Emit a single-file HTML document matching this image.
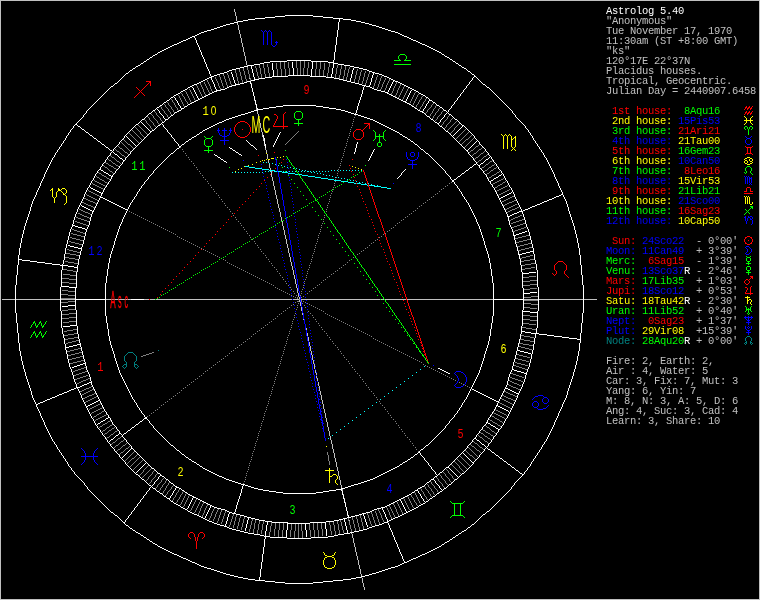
<!DOCTYPE html>
<html><head><meta charset="utf-8"><title>Astrolog 5.40</title>
<style>
html,body{margin:0;padding:0;background:#000;}
body{width:760px;height:600px;overflow:hidden;position:relative;}
svg{position:absolute;left:0;top:0;display:block}

.sb{position:absolute;left:606px;top:0;font-family:"Liberation Mono",monospace;font-size:10.5px;letter-spacing:-0.3px;line-height:10px;white-space:pre;color:#c0c0c0;will-change:transform;transform:translateZ(0)}
.sb div{position:absolute;left:0;height:10px}
.r{color:#ff0000}.g{color:#00ff00}.y{color:#ffff00}.b{color:#0000ff}.w{color:#ffffff}.l{color:#c0c0c0}.d{color:#008080}
text{font-family:"Liberation Mono",monospace;stroke:none}

</style></head><body>
<svg width="760" height="600" viewBox="0 0 760 600" shape-rendering="crispEdges" fill="none" stroke-width="1">
<rect width="760" height="600" fill="#000" stroke="none"/>
<path stroke="#c0c0c0" d="M0 0.5h760m-760 1h1m758 0h1m-760 1h1m758 0h1m-760 1h1m758 0h1m-760 1h1m758 0h1m-760 1h1m758 0h1m-760 1h1m758 0h1m-760 1h1m758 0h1m-760 1h1m758 0h1m-760 1h1m233 0h1m524 0h1m-760 1h1m233 0h1m524 0h1m-760 1h1m233 0h1m524 0h1m-760 1h1m234 0h1m523 0h1m-760 1h1m234 0h1m523 0h1m-760 1h1m234 0h1m523 0h1m-760 1h1m234 0h1m523 0h1m-760 1h1m235 0h1m522 0h1m-760 1h1m235 0h1m522 0h1m-760 1h1m235 0h1m522 0h1m-760 1h1m235 0h1m522 0h1m-760 1h1m235 0h1m522 0h1m-760 1h1m236 0h1m521 0h1m-760 1h1m758 0h1m-760 1h1m236 0h1m521 0h1m-760 1h1m236 0h1m521 0h1m-760 1h1m237 0h1m520 0h1m-760 1h1m237 0h1m520 0h1m-760 1h1m237 0h1m520 0h1m-760 1h1m237 0h1m520 0h1m-760 1h1m237 0h1m520 0h1m-760 1h1m238 0h1m519 0h1m-760 1h1m238 0h1m519 0h1m-760 1h1m238 0h1m519 0h1m-760 1h1m238 0h1m519 0h1m-760 1h1m239 0h1m518 0h1m-760 1h1m239 0h1m518 0h1m-760 1h1m239 0h1m518 0h1m-760 1h1m239 0h1m518 0h1m-760 1h1m240 0h1m517 0h1m-760 1h1m240 0h1m517 0h1m-760 1h1m240 0h1m517 0h1m-760 1h1m240 0h1m517 0h1m-760 1h1m240 0h1m517 0h1m-760 1h1m241 0h1m516 0h1m-760 1h1m241 0h1m516 0h1m-760 1h1m241 0h1m516 0h1m-760 1h1m241 0h1m516 0h1m-760 1h1m242 0h1m515 0h1m-760 1h1m242 0h1m515 0h1m-760 1h1m242 0h1m515 0h1m-760 1h1m242 0h1m515 0h1m-760 1h1m242 0h1m515 0h1m-760 1h1m243 0h1m514 0h1m-760 1h1m243 0h1m514 0h1m-760 1h1m243 0h1m514 0h1m-760 1h1m243 0h1m514 0h1m-760 1h1m244 0h1m513 0h1m-760 1h1m244 0h1m513 0h1m-760 1h1m244 0h1m513 0h1m-760 1h1m244 0h1m513 0h1m-760 1h1m244 0h1m513 0h1m-760 1h1m245 0h1m512 0h1m-760 1h1m245 0h1m512 0h1m-760 1h1m245 0h1m512 0h1m-760 1h1m245 0h1m512 0h1m-760 1h1m246 0h1m511 0h1m-760 1h1m758 0h1m-760 1h1m758 0h1m-760 1h1m758 0h1m-760 1h1m758 0h1m-760 1h1m758 0h1m-760 1h1m758 0h1m-760 1h1m758 0h1m-760 1h1m758 0h1m-760 1h1m758 0h1m-760 1h1m758 0h1m-760 1h1m758 0h1m-760 1h1m758 0h1m-760 1h1m248 0h1m509 0h1m-760 1h1m758 0h1m-760 1h1m758 0h1m-760 1h1m758 0h1m-760 1h1m758 0h1m-760 1h1m250 0h1m507 0h1m-760 1h1m758 0h1m-760 1h1m758 0h1m-760 1h1m758 0h1m-760 1h1m758 0h1m-760 1h1m758 0h1m-760 1h1m758 0h1m-760 1h1m758 0h1m-760 1h1m758 0h1m-760 1h1m758 0h1m-760 1h1m758 0h1m-760 1h1m758 0h1m-760 1h1m758 0h1m-760 1h1m758 0h1m-760 1h1m758 0h1m-760 1h1m758 0h1m-760 1h1m758 0h1m-760 1h1m253 0h1m504 0h1m-760 1h1m758 0h1m-760 1h1m758 0h1m-760 1h1m758 0h1m-760 1h1m254 0h1m503 0h1m-760 1h1m758 0h1m-760 1h1m758 0h1m-760 1h1m758 0h1m-760 1h1m255 0h1m502 0h1m-760 1h1m255 0h1m502 0h1m-760 1h1m758 0h1m-760 1h1m256 0h1m501 0h1m-760 1h1m256 0h1m501 0h1m-760 1h1m256 0h1m501 0h1m-760 1h1m257 0h1m500 0h1m-760 1h1m257 0h1m500 0h1m-760 1h1m257 0h1m500 0h1m-760 1h1m257 0h1m500 0h1m-760 1h1m257 0h1m500 0h1m-760 1h1m258 0h1m499 0h1m-760 1h1m258 0h1m499 0h1m-760 1h1m258 0h1m499 0h1m-760 1h1m258 0h1m499 0h1m-760 1h1m259 0h1m498 0h1m-760 1h1m259 0h1m498 0h1m-760 1h1m259 0h1m498 0h1m-760 1h1m259 0h1m498 0h1m-760 1h1m259 0h1m498 0h1m-760 1h1m260 0h1m497 0h1m-760 1h1m260 0h1m497 0h1m-760 1h1m260 0h1m497 0h1m-760 1h1m260 0h1m497 0h1m-760 1h1m261 0h1m496 0h1m-760 1h1m261 0h1m496 0h1m-760 1h1m261 0h1m496 0h1m-760 1h1m261 0h1m496 0h1m-760 1h1m261 0h1m496 0h1m-760 1h1m758 0h1m-760 1h1m262 0h1m495 0h1m-760 1h1m262 0h1m495 0h1m-760 1h1m262 0h1m495 0h1m-760 1h1m758 0h1m-760 1h1m758 0h1m-760 1h1m758 0h1m-760 1h1m263 0h1m494 0h1m-760 1h1m263 0h1m494 0h1m-760 1h1m758 0h1m-760 1h1m758 0h1m-760 1h1m264 0h1m493 0h1m-760 1h1m264 0h1m493 0h1m-760 1h1m265 0h1m492 0h1m-760 1h1m265 0h1m492 0h1m-760 1h1m265 0h1m492 0h1m-760 1h1m758 0h1m-760 1h1m266 0h1m491 0h1m-760 1h1m266 0h1m491 0h1m-760 1h1m266 0h1m491 0h1m-760 1h1m266 0h1m491 0h1m-760 1h1m266 0h1m491 0h1m-760 1h1m758 0h1m-760 1h1m267 0h1m490 0h1m-760 1h1m267 0h1m490 0h1m-760 1h1m267 0h1m490 0h1m-760 1h1m758 0h1m-760 1h1m268 0h1m489 0h1m-760 1h1m268 0h1m489 0h1m-760 1h1m268 0h1m489 0h1m-760 1h1m268 0h1m489 0h1m-760 1h1m269 0h1m488 0h1m-760 1h1m269 0h1m488 0h1m-760 1h1m758 0h1m-760 1h1m269 0h1m488 0h1m-760 1h1m270 0h1m487 0h1m-760 1h1m270 0h1m487 0h1m-760 1h1m270 0h1m487 0h1m-760 1h1m270 0h1m487 0h1m-760 1h1m270 0h1m487 0h1m-760 1h1m271 0h1m486 0h1m-760 1h1m271 0h1m486 0h1m-760 1h1m271 0h1m486 0h1m-760 1h1m271 0h1m486 0h1m-760 1h1m272 0h1m485 0h1m-760 1h1m272 0h1m485 0h1m-760 1h1m272 0h1m485 0h1m-760 1h1m272 0h1m485 0h1m-760 1h1m272 0h1m485 0h1m-760 1h1m273 0h1m484 0h1m-760 1h1m273 0h1m484 0h1m-760 1h1m273 0h1m484 0h1m-760 1h1m273 0h1m484 0h1m-760 1h1m274 0h1m483 0h1m-760 1h1m274 0h1m483 0h1m-760 1h1m274 0h1m483 0h1m-760 1h1m274 0h1m483 0h1m-760 1h1m274 0h1m483 0h1m-760 1h1m275 0h1m482 0h1m-760 1h1m275 0h1m482 0h1m-760 1h1m275 0h1m482 0h1m-760 1h1m275 0h1m482 0h1m-760 1h1m276 0h1m481 0h1m-760 1h1m276 0h1m481 0h1m-760 1h1m276 0h1m481 0h1m-760 1h1m276 0h1m481 0h1m-760 1h1m276 0h1m481 0h1m-760 1h1m277 0h1m480 0h1m-760 1h1m277 0h1m480 0h1m-760 1h1m277 0h1m480 0h1m-760 1h1m277 0h1m480 0h1m-760 1h1m278 0h1m479 0h1m-760 1h1m278 0h1m479 0h1m-760 1h1m278 0h1m479 0h1m-760 1h1m278 0h1m479 0h1m-760 1h1m279 0h1m478 0h1m-760 1h1m279 0h1m478 0h1m-760 1h1m279 0h1m478 0h1m-760 1h1m279 0h1m478 0h1m-760 1h1m279 0h1m478 0h1m-760 1h1m280 0h1m477 0h1m-760 1h1m280 0h1m477 0h1m-760 1h1m280 0h1m477 0h1m-760 1h1m280 0h1m477 0h1m-760 1h1m281 0h1m476 0h1m-760 1h1m281 0h1m476 0h1m-760 1h1m281 0h1m476 0h1m-760 1h1m281 0h1m476 0h1m-760 1h1m281 0h1m476 0h1m-760 1h1m282 0h1m475 0h1m-760 1h1m282 0h1m475 0h1m-760 1h1m282 0h1m475 0h1m-760 1h1m282 0h1m475 0h1m-760 1h1m283 0h1m474 0h1m-760 1h1m283 0h1m474 0h1m-760 1h1m283 0h1m474 0h1m-760 1h1m283 0h1m474 0h1m-760 1h1m283 0h1m474 0h1m-760 1h1m284 0h1m473 0h1m-760 1h1m284 0h1m473 0h1m-760 1h1m284 0h1m473 0h1m-760 1h1m284 0h1m473 0h1m-760 1h1m285 0h1m472 0h1m-760 1h1m285 0h1m472 0h1m-760 1h1m285 0h1m472 0h1m-760 1h1m285 0h1m472 0h1m-760 1h1m285 0h1m472 0h1m-760 1h1m286 0h1m471 0h1m-760 1h1m286 0h1m471 0h1m-760 1h1m286 0h1m471 0h1m-760 1h1m286 0h1m471 0h1m-760 1h1m287 0h1m470 0h1m-760 1h1m287 0h1m470 0h1m-760 1h1m287 0h1m470 0h1m-760 1h1m287 0h1m470 0h1m-760 1h1m287 0h1m470 0h1m-760 1h1m288 0h1m469 0h1m-760 1h1m288 0h1m469 0h1m-760 1h1m288 0h1m469 0h1m-760 1h1m288 0h1m469 0h1m-760 1h1m289 0h1m468 0h1m-760 1h1m289 0h1m468 0h1m-760 1h1m289 0h1m468 0h1m-760 1h1m289 0h1m468 0h1m-760 1h1m289 0h1m468 0h1m-760 1h1m290 0h1m467 0h1m-760 1h1m290 0h1m467 0h1m-760 1h1m290 0h1m467 0h1m-760 1h1m290 0h1m467 0h1m-760 1h1m291 0h1m466 0h1m-760 1h1m291 0h1m466 0h1m-760 1h1m291 0h1m466 0h1m-760 1h1m291 0h1m466 0h1m-760 1h1m292 0h1m465 0h1m-760 1h1m292 0h1m465 0h1m-760 1h1m292 0h1m465 0h1m-760 1h1m292 0h1m465 0h1m-760 1h1m292 0h1m465 0h1m-760 1h1m293 0h1m464 0h1m-760 1h1m293 0h1m464 0h1m-760 1h1m293 0h1m464 0h1m-760 1h1m293 0h1m464 0h1m-760 1h1m294 0h1m463 0h1m-760 1h1m294 0h1m463 0h1m-760 1h1m294 0h1m463 0h1m-760 1h1m294 0h1m463 0h1m-760 1h1m294 0h1m463 0h1m-760 1h1m295 0h1m462 0h1m-760 1h1m295 0h1m462 0h1m-760 1h1m295 0h1m462 0h1m-760 1h1m295 0h1m462 0h1m-760 1h1m296 0h1m461 0h1m-760 1h1m296 0h1m461 0h1m-760 1h1m296 0h1m461 0h1m-760 1h1m296 0h1m461 0h1m-760 1h1m296 0h1m461 0h1m-760 1h1m297 0h1m460 0h1m-760 1h1m297 0h1m460 0h1m-760 1h1m297 0h1m460 0h1m-760 1h1m297 0h1m460 0h1m-760 1h1m298 0h1m459 0h1m-760 1h1m298 0h1m459 0h1m-760 1h1m1 0h13m1 0h44m1 0h14m31 0h25m13 0h5m1 0h5m1 0h136m1 0h6m2 0h79m1 0h3m1 0h21m1 0h86m31 0h14m1 0h44m1 0h13m162 0h1m-760 1h1m298 0h1m459 0h1m-760 1h1m298 0h1m459 0h1m-760 1h1m299 0h1m458 0h1m-760 1h1m299 0h1m458 0h1m-760 1h1m299 0h1m458 0h1m-760 1h1m299 0h1m458 0h1m-760 1h1m758 0h1m-760 1h1m300 0h1m457 0h1m-760 1h1m300 0h1m457 0h1m-760 1h1m300 0h1m457 0h1m-760 1h1m300 0h1m457 0h1m-760 1h1m758 0h1m-760 1h1m758 0h1m-760 1h1m301 0h1m456 0h1m-760 1h1m301 0h1m456 0h1m-760 1h1m758 0h1m-760 1h1m758 0h1m-760 1h1m758 0h1m-760 1h1m758 0h1m-760 1h1m302 0h1m455 0h1m-760 1h1m758 0h1m-760 1h1m758 0h1m-760 1h1m758 0h1m-760 1h1m758 0h1m-760 1h1m758 0h1m-760 1h1m758 0h1m-760 1h1m758 0h1m-760 1h1m758 0h1m-760 1h1m305 0h1m452 0h1m-760 1h1m305 0h1m452 0h1m-760 1h1m758 0h1m-760 1h1m758 0h1m-760 1h1m758 0h1m-760 1h1m306 0h1m451 0h1m-760 1h1m306 0h1m451 0h1m-760 1h1m306 0h1m451 0h1m-760 1h1m758 0h1m-760 1h1m307 0h1m450 0h1m-760 1h1m307 0h1m450 0h1m-760 1h1m307 0h1m450 0h1m-760 1h1m307 0h1m450 0h1m-760 1h1m758 0h1m-760 1h1m308 0h1m449 0h1m-760 1h1m308 0h1m449 0h1m-760 1h1m308 0h1m449 0h1m-760 1h1m308 0h1m449 0h1m-760 1h1m309 0h1m448 0h1m-760 1h1m309 0h1m448 0h1m-760 1h1m309 0h1m448 0h1m-760 1h1m309 0h1m448 0h1m-760 1h1m309 0h1m448 0h1m-760 1h1m310 0h1m447 0h1m-760 1h1m310 0h1m447 0h1m-760 1h1m310 0h1m447 0h1m-760 1h1m310 0h1m447 0h1m-760 1h1m311 0h1m446 0h1m-760 1h1m311 0h1m446 0h1m-760 1h1m311 0h1m446 0h1m-760 1h1m311 0h1m446 0h1m-760 1h1m311 0h1m446 0h1m-760 1h1m312 0h1m445 0h1m-760 1h1m312 0h1m445 0h1m-760 1h1m312 0h1m445 0h1m-760 1h1m312 0h1m445 0h1m-760 1h1m313 0h1m444 0h1m-760 1h1m313 0h1m444 0h1m-760 1h1m313 0h1m444 0h1m-760 1h1m313 0h1m444 0h1m-760 1h1m313 0h1m444 0h1m-760 1h1m758 0h1m-760 1h1m314 0h1m443 0h1m-760 1h1m314 0h1m443 0h1m-760 1h1m314 0h1m443 0h1m-760 1h1m315 0h1m442 0h1m-760 1h1m315 0h1m442 0h1m-760 1h1m758 0h1m-760 1h1m315 0h1m442 0h1m-760 1h1m315 0h1m442 0h1m-760 1h1m316 0h1m441 0h1m-760 1h1m316 0h1m441 0h1m-760 1h1m316 0h1m441 0h1m-760 1h1m758 0h1m-760 1h1m317 0h1m440 0h1m-760 1h1m317 0h1m440 0h1m-760 1h1m317 0h1m440 0h1m-760 1h1m317 0h1m440 0h1m-760 1h1m318 0h1m439 0h1m-760 1h1m318 0h1m439 0h1m-760 1h1m318 0h1m439 0h1m-760 1h1m318 0h1m439 0h1m-760 1h1m318 0h1m439 0h1m-760 1h1m319 0h1m438 0h1m-760 1h1m319 0h1m438 0h1m-760 1h1m319 0h1m438 0h1m-760 1h1m319 0h1m438 0h1m-760 1h1m320 0h1m437 0h1m-760 1h1m320 0h1m437 0h1m-760 1h1m320 0h1m437 0h1m-760 1h1m320 0h1m437 0h1m-760 1h1m320 0h1m437 0h1m-760 1h1m321 0h1m436 0h1m-760 1h1m321 0h1m436 0h1m-760 1h1m321 0h1m436 0h1m-760 1h1m321 0h1m436 0h1m-760 1h1m322 0h1m435 0h1m-760 1h1m322 0h1m435 0h1m-760 1h1m322 0h1m435 0h1m-760 1h1m322 0h1m435 0h1m-760 1h1m322 0h1m435 0h1m-760 1h1m323 0h1m434 0h1m-760 1h1m323 0h1m434 0h1m-760 1h1m323 0h1m434 0h1m-760 1h1m323 0h1m434 0h1m-760 1h1m324 0h1m433 0h1m-760 1h1m324 0h1m433 0h1m-760 1h1m324 0h1m433 0h1m-760 1h1m324 0h1m433 0h1m-760 1h1m324 0h1m433 0h1m-760 1h1m325 0h1m432 0h1m-760 1h1m325 0h1m432 0h1m-760 1h1m325 0h1m432 0h1m-760 1h1m325 0h1m432 0h1m-760 1h1m326 0h1m431 0h1m-760 1h1m326 0h1m431 0h1m-760 1h1m326 0h1m431 0h1m-760 1h1m326 0h1m431 0h1m-760 1h1m326 0h1m431 0h1m-760 1h1m327 0h1m430 0h1m-760 1h1m327 0h1m430 0h1m-760 1h1m327 0h1m430 0h1m-760 1h1m327 0h1m430 0h1m-760 1h1m328 0h1m429 0h1m-760 1h1m328 0h1m429 0h1m-760 1h1m328 0h1m429 0h1m-760 1h1m328 0h1m429 0h1m-760 1h1m328 0h1m429 0h1m-760 1h1m329 0h1m428 0h1m-760 1h1m329 0h1m428 0h1m-760 1h1m329 0h1m428 0h1m-760 1h1m329 0h1m428 0h1m-760 1h1m330 0h1m427 0h1m-760 1h1m330 0h1m427 0h1m-760 1h1m330 0h1m427 0h1m-760 1h1m330 0h1m427 0h1m-760 1h1m331 0h1m426 0h1m-760 1h1m331 0h1m426 0h1m-760 1h1m331 0h1m426 0h1m-760 1h1m331 0h1m426 0h1m-760 1h1m331 0h1m426 0h1m-760 1h1m332 0h1m425 0h1m-760 1h1m332 0h1m425 0h1m-760 1h1m332 0h1m425 0h1m-760 1h1m332 0h1m425 0h1m-760 1h1m333 0h1m424 0h1m-760 1h1m333 0h1m424 0h1m-760 1h1m333 0h1m424 0h1m-760 1h1m333 0h1m424 0h1m-760 1h1m333 0h1m424 0h1m-760 1h1m334 0h1m423 0h1m-760 1h1m334 0h1m423 0h1m-760 1h1m334 0h1m423 0h1m-760 1h1m334 0h1m423 0h1m-760 1h1m335 0h1m422 0h1m-760 1h1m335 0h1m422 0h1m-760 1h1m335 0h1m422 0h1m-760 1h1m335 0h1m422 0h1m-760 1h1m335 0h1m422 0h1m-760 1h1m336 0h1m421 0h1m-760 1h1m336 0h1m421 0h1m-760 1h1m336 0h1m421 0h1m-760 1h1m336 0h1m421 0h1m-760 1h1m337 0h1m420 0h1m-760 1h1m337 0h1m420 0h1m-760 1h1m337 0h1m420 0h1m-760 1h1m337 0h1m420 0h1m-760 1h1m337 0h1m420 0h1m-760 1h1m338 0h1m419 0h1m-760 1h1m338 0h1m419 0h1m-760 1h1m338 0h1m419 0h1m-760 1h1m338 0h1m419 0h1m-760 1h1m339 0h1m418 0h1m-760 1h1m339 0h1m418 0h1m-760 1h1m339 0h1m418 0h1m-760 1h1m339 0h1m418 0h1m-760 1h1m339 0h1m418 0h1m-760 1h1m340 0h1m417 0h1m-760 1h1m340 0h1m417 0h1m-760 1h1m340 0h1m417 0h1m-760 1h1m758 0h1m-760 1h1m341 0h1m416 0h1m-760 1h1m341 0h1m416 0h1m-760 1h1m758 0h1m-760 1h1m758 0h1m-760 1h1m758 0h1m-760 1h1m342 0h1m415 0h1m-760 1h1m758 0h1m-760 1h1m758 0h1m-760 1h1m758 0h1m-760 1h1m343 0h1m414 0h1m-760 1h1m758 0h1m-760 1h1m758 0h1m-760 1h1m758 0h1m-760 1h1m344 0h1m413 0h1m-760 1h1m758 0h1m-760 1h1m758 0h1m-760 1h1m758 0h1m-760 1h1m758 0h1m-760 1h1m758 0h1m-760 1h1m758 0h1m-760 1h1m758 0h1m-760 1h1m758 0h1m-760 1h1m758 0h1m-760 1h1m758 0h1m-760 1h1m758 0h1m-760 1h1m758 0h1m-760 1h1m346 0h1m411 0h1m-760 1h1m758 0h1m-760 1h1m758 0h1m-760 1h1m758 0h1m-760 1h1m758 0h1m-760 1h1m348 0h1m409 0h1m-760 1h1m758 0h1m-760 1h1m758 0h1m-760 1h1m758 0h1m-760 1h1m758 0h1m-760 1h1m758 0h1m-760 1h1m758 0h1m-760 1h1m758 0h1m-760 1h1m758 0h1m-760 1h1m758 0h1m-760 1h1m758 0h1m-760 1h1m758 0h1m-760 1h1m758 0h1m-760 1h1m350 0h1m407 0h1m-760 1h1m351 0h1m406 0h1m-760 1h1m351 0h1m406 0h1m-760 1h1m351 0h1m406 0h1m-760 1h1m351 0h1m406 0h1m-760 1h1m352 0h1m405 0h1m-760 1h1m352 0h1m405 0h1m-760 1h1m352 0h1m405 0h1m-760 1h1m352 0h1m405 0h1m-760 1h1m352 0h1m405 0h1m-760 1h1m353 0h1m404 0h1m-760 1h1m353 0h1m404 0h1m-760 1h1m353 0h1m404 0h1m-760 1h1m353 0h1m404 0h1m-760 1h1m354 0h1m403 0h1m-760 1h1m354 0h1m403 0h1m-760 1h1m354 0h1m403 0h1m-760 1h1m354 0h1m403 0h1m-760 1h1m354 0h1m403 0h1m-760 1h1m355 0h1m402 0h1m-760 1h1m355 0h1m402 0h1m-760 1h1m355 0h1m402 0h1m-760 1h1m355 0h1m402 0h1m-760 1h1m356 0h1m401 0h1m-760 1h1m356 0h1m401 0h1m-760 1h1m356 0h1m401 0h1m-760 1h1m356 0h1m401 0h1m-760 1h1m357 0h1m400 0h1m-760 1h1m357 0h1m400 0h1m-760 1h1m357 0h1m400 0h1m-760 1h1m357 0h1m400 0h1m-760 1h1m357 0h1m400 0h1m-760 1h1m358 0h1m399 0h1m-760 1h1m358 0h1m399 0h1m-760 1h1m358 0h1m399 0h1m-760 1h1m358 0h1m399 0h1m-760 1h1m359 0h1m398 0h1m-760 1h1m359 0h1m398 0h1m-760 1h1m359 0h1m398 0h1m-760 1h1m359 0h1m398 0h1m-760 1h1m359 0h1m398 0h1m-760 1h1m360 0h1m397 0h1m-760 1h1m360 0h1m397 0h1m-760 1h1m758 0h1m-760 1h1m360 0h1m397 0h1m-760 1h1m361 0h1m396 0h1m-760 1h1m361 0h1m396 0h1m-760 1h1m361 0h1m396 0h1m-760 1h1m361 0h1m396 0h1m-760 1h1m361 0h1m396 0h1m-760 1h1m362 0h1m395 0h1m-760 1h1m362 0h1m395 0h1m-760 1h1m362 0h1m395 0h1m-760 1h1m362 0h1m395 0h1m-760 1h1m363 0h1m394 0h1m-760 1h1m363 0h1m394 0h1m-760 1h1m363 0h1m394 0h1m-760 1h1m758 0h1m-760 1h1m758 0h1m-760 1h1m758 0h1m-760 1h1m758 0h1m-760 1h1m758 0h1m-760 1h1m758 0h1m-760 1h1m758 0h1m-760 1h1m758 0h1m-760 1h1m758 0h1m-760 1h760"/>
<path stroke="#ffffff" d="M285 15.5h28m-38 1h10m28 0h10m-58 1h10m48 0h10m-78 1h10m68 0h10m-95 1h7m84 0h1m3 0h8m-108 1h5m91 0h1m11 0h5m-118 1h5m96 0h1m16 0h5m-127 1h4m100 0h1m22 0h4m-135 1h4m104 0h1m26 0h4m-143 1h4m108 0h1m30 0h3m-149 1h3m112 0h1m33 0h4m-156 1h3m115 0h1m37 0h3m-162 1h3m118 0h1m40 0h3m-168 1h3m121 0h1m43 0h3m-174 1h3m124 0h1m46 0h3m-181 1h4m126 0h1m50 0h3m-187 1h3m130 0h1m53 0h4m-194 1h3m133 0h1m57 0h3m-199 1h2m136 0h1m60 0h2m-203 1h2m138 0h1m62 0h2m-207 1h2m140 0h1m64 0h2m-212 1h3m142 0h1m66 0h3m-217 1h2m2 0h1m141 0h1m70 0h2m-221 1h2m5 0h1m140 0h1m72 0h2m-225 1h2m7 0h1m140 0h1m74 0h2m-230 1h3m10 0h1m139 0h1m76 0h3m-235 1h2m13 0h1m139 0h1m79 0h2m-239 1h2m15 0h1m139 0h1m81 0h2m-243 1h2m18 0h1m138 0h1m83 0h2m-248 1h3m20 0h1m138 0h1m85 0h3m-253 1h2m24 0h1m136 0h1m89 0h2m-257 1h2m26 0h1m136 0h1m91 0h2m-261 1h2m29 0h1m135 0h1m93 0h2m-265 1h2m31 0h1m135 0h1m95 0h2m-269 1h2m33 0h1m135 0h1m97 0h2m-273 1h2m36 0h1m134 0h1m99 0h2m-277 1h2m38 0h1m134 0h1m101 0h2m-281 1h2m41 0h1m132 0h1m104 0h2m-284 1h1m43 0h1m132 0h1m106 0h1m-287 1h2m44 0h1m132 0h1m107 0h2m-291 1h2m47 0h1m131 0h1m109 0h1m-293 1h1m49 0h1m131 0h1m110 0h2m-297 1h2m51 0h1m130 0h1m112 0h2m-300 1h1m53 0h1m130 0h1m114 0h1m-303 1h2m55 0h1m129 0h1m115 0h2m-306 1h1m57 0h1m82 0h24m22 0h1m118 0h1m-309 1h2m58 0h1m65 0h17m24 0h17m5 0h1m119 0h2m-312 1h1m61 0h1m58 0h6m22 0h1m19 0h1m15 0h6m121 0h1m-315 1h2m62 0h1m54 0h4m8 0h1m19 0h1m19 0h1m20 0h5m118 0h2m-318 1h1m65 0h1m47 0h6m12 0h1m19 0h1m19 0h1m20 0h1m4 0h6m114 0h1m-321 1h2m66 0h1m41 0h6m18 0h1m19 0h1m19 0h1m20 0h1m10 0h6m109 0h2m-325 1h2m68 0h1m37 0h4m3 0h1m20 0h1m19 0h1m19 0h1m20 0h1m16 0h4m107 0h1m-327 1h1m71 0h1m32 0h4m7 0h1m20 0h1m19 0h1m19 0h1m20 0h1m20 0h5m103 0h2m-331 1h2m72 0h1m28 0h4m11 0h1m20 0h1m20 0h1m18 0h1m19 0h1m20 0h1m5 0h4m101 0h2m-334 1h1m75 0h1m23 0h4m16 0h1m19 0h1m20 0h1m17 0h1m20 0h1m20 0h1m9 0h4m99 0h1m-337 1h2m76 0h1m20 0h3m20 0h1m20 0h1m19 0h1m17 0h1m20 0h1m19 0h1m14 0h2m98 0h1m-339 1h1m79 0h1m17 0h2m23 0h1m20 0h1m19 0h1m17 0h1m20 0h1m19 0h1m16 0h3m96 0h2m-342 1h1m80 0h1m14 0h3m4 0h1m20 0h1m20 0h1m19 0h1m17 0h1m20 0h1m19 0h1m19 0h3m95 0h1m-345 1h2m81 0h1m10 0h4m7 0h1m21 0h1m19 0h1m19 0h1m17 0h1m20 0h1m19 0h1m20 0h1m1 0h4m92 0h1m-347 1h1m84 0h1m6 0h3m12 0h1m20 0h1m19 0h1m19 0h1m17 0h1m19 0h1m19 0h1m21 0h1m5 0h3m90 0h2m-350 1h1m85 0h1m3 0h3m15 0h1m20 0h1m19 0h1m14 0h22m1 0h1m19 0h1m19 0h1m20 0h1m9 0h2m90 0h1m-352 1h1m87 0h3m18 0h1m20 0h1m18 0h16m22 0h16m5 0h1m19 0h1m20 0h1m11 0h3m87 0h2m-354 1h1m86 0h3m21 0h1m20 0h1m10 0h7m54 0h8m17 0h1m20 0h1m14 0h2m84 0h1m2 0h1m-356 1h1m85 0h2m2 0h1m21 0h1m20 0h1m4 0h6m69 0h5m11 0h1m20 0h1m17 0h2m81 0h1m4 0h1m-358 1h1m84 0h2m4 0h1m21 0h1m20 0h5m80 0h4m7 0h1m20 0h1m19 0h2m79 0h1m5 0h1m-360 1h1m83 0h2m7 0h1m21 0h1m16 0h4m88 0h4m3 0h1m20 0h1m21 0h2m76 0h1m7 0h1m-362 1h1m82 0h2m9 0h1m21 0h1m12 0h4m96 0h4m20 0h1m21 0h1m1 0h3m72 0h1m9 0h1m-364 1h1m81 0h2m12 0h1m20 0h1m9 0h3m3 0h1m100 0h4m15 0h1m21 0h1m5 0h2m69 0h1m11 0h1m-367 1h2m80 0h2m14 0h1m21 0h1m4 0h4m6 0h1m104 0h4m11 0h1m21 0h1m7 0h2m67 0h1m12 0h1m-369 1h1m79 0h3m17 0h1m20 0h5m11 0h1m107 0h3m8 0h1m20 0h1m10 0h2m64 0h1m14 0h2m-372 1h1m78 0h2m20 0h1m17 0h4m15 0h1m110 0h4m3 0h1m21 0h1m12 0h2m61 0h1m17 0h1m-375 1h2m77 0h2m22 0h1m14 0h3m19 0h1m112 0h1m1 0h4m20 0h1m15 0h2m58 0h1m19 0h1m-377 1h1m77 0h2m2 0h1m22 0h1m11 0h2m22 0h1m111 0h1m6 0h2m18 0h1m17 0h2m56 0h1m20 0h2m-380 1h1m77 0h1m5 0h1m21 0h1m9 0h2m25 0h1m110 0h1m8 0h2m15 0h1m20 0h2m53 0h1m23 0h1m-382 1h1m76 0h2m6 0h1m22 0h1m4 0h4m27 0h1m110 0h1m10 0h3m12 0h1m22 0h2m50 0h1m25 0h1m-384 1h1m75 0h2m9 0h1m21 0h5m31 0h1m109 0h1m14 0h4m7 0h1m22 0h1m2 0h2m47 0h1m27 0h1m-386 1h1m74 0h2m11 0h1m19 0h3m35 0h1m109 0h1m18 0h4m3 0h1m21 0h1m5 0h2m45 0h1m28 0h1m-388 1h1m74 0h1m14 0h1m16 0h2m39 0h1m108 0h1m22 0h3m22 0h1m7 0h1m43 0h1m30 0h1m-390 1h1m73 0h2m15 0h1m14 0h2m41 0h1m108 0h1m24 0h2m20 0h1m9 0h2m40 0h1m32 0h1m-392 1h1m72 0h2m18 0h1m11 0h2m43 0h1m107 0h1m27 0h2m18 0h1m11 0h2m37 0h1m34 0h1m-394 1h1m71 0h2m20 0h1m9 0h2m45 0h1m107 0h1m29 0h2m15 0h1m14 0h2m35 0h1m35 0h1m-396 1h1m71 0h1m23 0h1m6 0h2m48 0h1m106 0h1m31 0h2m13 0h1m16 0h1m33 0h1m37 0h1m-398 1h1m70 0h2m1 0h1m22 0h1m4 0h2m50 0h1m105 0h1m34 0h2m10 0h1m18 0h2m30 0h1m39 0h1m-400 1h1m70 0h1m4 0h1m22 0h1m1 0h2m52 0h1m105 0h1m36 0h2m8 0h1m20 0h1m28 0h1m41 0h1m-402 1h1m70 0h1m5 0h1m22 0h2m54 0h1m105 0h1m38 0h2m5 0h1m22 0h1m27 0h1m42 0h1m-404 1h1m69 0h2m7 0h1m19 0h2m57 0h1m103 0h1m41 0h2m3 0h1m22 0h3m24 0h1m44 0h1m-406 1h1m69 0h1m10 0h1m16 0h2m59 0h1m103 0h1m43 0h3m22 0h1m3 0h1m22 0h1m46 0h1m-408 1h1m68 0h2m11 0h1m14 0h2m61 0h1m103 0h1m45 0h2m21 0h1m4 0h2m19 0h1m48 0h1m-410 1h1m68 0h1m14 0h1m11 0h2m63 0h1m102 0h1m48 0h2m18 0h1m7 0h1m18 0h1m49 0h1m-412 1h1m68 0h1m15 0h1m9 0h2m66 0h1m101 0h1m50 0h2m15 0h1m9 0h1m16 0h1m51 0h1m-414 1h1m67 0h2m17 0h1m7 0h1m68 0h1m26 0h33m42 0h1m52 0h1m14 0h1m10 0h2m13 0h1m53 0h1m-416 1h1m67 0h1m20 0h1m4 0h2m69 0h1m19 0h7m33 0h7m34 0h1m54 0h2m11 0h1m13 0h1m11 0h1m55 0h1m-418 1h1m66 0h2m21 0h1m3 0h1m71 0h1m12 0h7m47 0h6m28 0h1m56 0h1m10 0h1m14 0h2m9 0h1m56 0h1m-420 1h1m66 0h1m24 0h3m73 0h1m5 0h6m60 0h7m21 0h1m57 0h2m7 0h1m17 0h1m7 0h1m58 0h1m-422 1h1m66 0h1m1 0h1m23 0h1m75 0h6m73 0h5m16 0h1m59 0h1m5 0h1m19 0h1m5 0h1m60 0h1m-424 1h1m65 0h2m3 0h1m20 0h2m73 0h4m83 0h4m11 0h1m61 0h2m3 0h1m20 0h2m2 0h1m62 0h1m-426 1h1m65 0h1m6 0h1m17 0h2m72 0h3m91 0h3m8 0h1m63 0h3m23 0h1m1 0h1m63 0h1m-427 1h1m64 0h1m7 0h1m15 0h2m71 0h3m97 0h3m5 0h1m65 0h2m23 0h1m64 0h1m-428 1h1m63 0h2m9 0h1m13 0h1m70 0h3m103 0h3m1 0h1m68 0h1m21 0h1m1 0h1m64 0h1m-430 1h1m63 0h1m12 0h1m11 0h1m67 0h4m109 0h4m67 0h1m19 0h1m3 0h2m63 0h1m-432 1h1m63 0h1m14 0h1m8 0h2m65 0h3m117 0h3m65 0h1m17 0h1m6 0h1m63 0h1m-433 1h1m62 0h1m16 0h1m6 0h1m64 0h3m123 0h3m63 0h2m15 0h1m7 0h1m62 0h1m-434 1h1m62 0h1m17 0h1m5 0h1m62 0h3m129 0h3m62 0h1m13 0h1m9 0h1m62 0h1m-436 1h1m62 0h1m19 0h1m3 0h1m60 0h3m135 0h3m60 0h1m11 0h1m11 0h1m62 0h1m-438 1h1m61 0h2m21 0h3m58 0h3m141 0h3m58 0h2m8 0h1m13 0h2m61 0h1m-440 1h1m61 0h1m23 0h1m58 0h2m147 0h2m58 0h1m6 0h1m16 0h1m61 0h1m-442 1h1m61 0h1m23 0h1m57 0h2m151 0h2m57 0h1m5 0h1m17 0h1m61 0h1m-444 1h1m61 0h1m1 0h1m20 0h2m55 0h3m155 0h2m56 0h2m2 0h1m19 0h1m61 0h1m-446 1h1m61 0h1m3 0h1m18 0h1m55 0h2m160 0h2m56 0h2m21 0h1m61 0h1m-448 1h2m59 0h2m5 0h1m16 0h1m1 0h1m52 0h2m164 0h2m55 0h1m22 0h1m61 0h1m-450 1h1m2 0h1m57 0h1m8 0h1m13 0h2m3 0h1m49 0h2m168 0h2m54 0h1m22 0h2m60 0h1m-452 1h1m4 0h2m54 0h1m10 0h1m11 0h1m5 0h1m47 0h2m172 0h2m53 0h2m20 0h1m1 0h1m60 0h1m-453 1h1m6 0h1m52 0h1m12 0h1m9 0h1m7 0h1m44 0h2m176 0h2m53 0h1m18 0h1m3 0h1m59 0h1m-454 1h1m8 0h1m50 0h1m14 0h1m7 0h1m9 0h1m41 0h2m180 0h2m52 0h1m16 0h1m5 0h1m59 0h1m-456 1h1m10 0h2m47 0h1m16 0h1m5 0h1m11 0h1m38 0h2m184 0h2m51 0h1m14 0h1m7 0h1m59 0h1m-458 1h1m13 0h1m45 0h1m18 0h1m2 0h2m13 0h1m35 0h2m188 0h2m50 0h1m12 0h1m9 0h1m59 0h1m-459 1h1m14 0h1m43 0h1m20 0h2m15 0h1m34 0h1m192 0h2m49 0h2m9 0h1m11 0h1m58 0h1m-460 1h1m16 0h2m40 0h1m21 0h1m17 0h1m31 0h2m78 0h1m116 0h2m49 0h1m7 0h1m13 0h1m58 0h1m-462 1h1m19 0h1m38 0h1m21 0h1m19 0h1m29 0h1m79 0h1m119 0h1m49 0h1m5 0h1m15 0h1m58 0h1m-463 1h1m20 0h1m36 0h1m21 0h1m21 0h1m26 0h2m80 0h1m120 0h2m48 0h1m3 0h1m17 0h1m57 0h1m-464 1h1m22 0h2m33 0h1m21 0h1m23 0h1m24 0h1m66 0h1m14 0h1m123 0h1m48 0h1m1 0h1m19 0h1m57 0h1m-466 1h1m25 0h1m31 0h1m1 0h1m19 0h1m24 0h1m22 0h2m67 0h1m14 0h1m124 0h2m47 0h1m21 0h1m57 0h1m-467 1h1m26 0h1m30 0h1m2 0h1m17 0h1m26 0h1m19 0h2m69 0h1m13 0h1m127 0h2m46 0h1m20 0h1m57 0h1m-468 1h1m28 0h2m27 0h1m4 0h1m15 0h1m28 0h1m17 0h1m72 0h1m12 0h1m129 0h1m46 0h1m20 0h1m57 0h1m-469 1h1m30 0h1m25 0h1m6 0h1m13 0h1m30 0h1m14 0h2m73 0h1m11 0h1m131 0h2m45 0h1m20 0h1m56 0h1m-470 1h1m32 0h1m23 0h1m8 0h1m11 0h1m31 0h1m13 0h1m57 0h1m17 0h1m11 0h1m133 0h1m45 0h1m20 0h1m56 0h1m-472 1h1m34 0h2m20 0h1m10 0h1m9 0h1m33 0h1m10 0h2m59 0h1m16 0h1m10 0h1m135 0h2m44 0h1m18 0h1m1 0h1m56 0h1m-473 1h1m36 0h1m18 0h1m12 0h1m7 0h1m35 0h1m8 0h1m62 0h1m15 0h1m10 0h1m81 0h1m55 0h1m44 0h1m16 0h1m3 0h1m55 0h1m-474 1h1m38 0h1m17 0h1m13 0h1m5 0h1m37 0h1m6 0h1m64 0h1m14 0h1m9 0h1m82 0h1m56 0h1m44 0h1m14 0h1m4 0h1m56 0h1m-476 1h1m40 0h2m14 0h1m15 0h1m3 0h1m39 0h1m3 0h2m66 0h1m14 0h1m8 0h1m81 0h1m58 0h2m43 0h1m12 0h1m6 0h1m56 0h1m-477 1h1m42 0h1m12 0h1m17 0h1m1 0h1m40 0h1m2 0h1m69 0h2m12 0h1m7 0h1m82 0h1m60 0h1m43 0h1m10 0h1m8 0h1m55 0h1m-478 1h1m44 0h1m10 0h1m19 0h1m42 0h2m72 0h1m11 0h1m7 0h1m82 0h1m61 0h1m43 0h1m8 0h1m10 0h1m55 0h1m-480 1h1m46 0h2m7 0h1m19 0h1m43 0h1m49 0h1m24 0h1m10 0h1m90 0h1m62 0h1m43 0h1m6 0h1m12 0h1m55 0h1m-481 1h1m48 0h1m5 0h1m19 0h1m42 0h2m51 0h2m23 0h1m99 0h1m64 0h1m43 0h1m4 0h1m14 0h1m54 0h1m-482 1h1m50 0h1m3 0h1m19 0h1m42 0h1m55 0h1m23 0h1m98 0h1m18 0h1m46 0h2m42 0h1m2 0h1m16 0h1m54 0h1m-484 1h1m52 0h2m1 0h1m18 0h1m42 0h1m57 0h2m120 0h1m17 0h1m49 0h1m42 0h2m17 0h1m55 0h1m-485 1h1m54 0h1m18 0h1m42 0h1m60 0h1m119 0h1m17 0h1m50 0h1m42 0h1m18 0h1m54 0h1m-486 1h1m54 0h1m1 0h1m16 0h1m42 0h1m62 0h2m116 0h1m17 0h1m52 0h1m42 0h1m18 0h1m54 0h1m-488 1h1m54 0h1m3 0h1m15 0h1m40 0h2m65 0h1m115 0h1m17 0h1m53 0h2m40 0h1m19 0h1m54 0h1m-489 1h1m54 0h1m4 0h2m12 0h1m40 0h1m43 0h1m24 0h2m130 0h1m56 0h1m40 0h1m18 0h1m54 0h1m-490 1h1m54 0h1m7 0h1m10 0h1m40 0h1m45 0h2m24 0h1m129 0h1m57 0h1m40 0h1m18 0h1m54 0h1m-491 1h1m53 0h1m9 0h1m8 0h1m40 0h1m48 0h1m152 0h1m59 0h1m40 0h1m18 0h1m53 0h1m-492 1h1m53 0h1m11 0h1m6 0h1m40 0h1m50 0h2m150 0h1m60 0h1m40 0h1m16 0h1m1 0h1m53 0h1m-494 1h1m54 0h1m12 0h2m3 0h1m40 0h1m53 0h1m148 0h1m62 0h1m40 0h1m14 0h1m2 0h1m54 0h1m-495 1h1m53 0h1m15 0h1m2 0h1m39 0h1m55 0h2m146 0h1m63 0h1m39 0h1m12 0h2m4 0h1m53 0h1m-496 1h1m53 0h1m17 0h2m39 0h1m58 0h1m144 0h1m65 0h1m39 0h1m10 0h1m7 0h1m53 0h1m-497 1h1m53 0h1m17 0h1m39 0h1m60 0h2m209 0h1m39 0h1m8 0h1m8 0h1m53 0h1m-498 1h1m53 0h1m17 0h1m39 0h1m63 0h1m209 0h1m39 0h1m6 0h1m10 0h1m53 0h1m-499 1h1m52 0h1m18 0h1m38 0h1m275 0h1m38 0h1m4 0h2m12 0h1m52 0h1m-500 1h1m52 0h1m18 0h1m38 0h1m277 0h1m35 0h2m1 0h1m2 0h1m15 0h1m52 0h1m-501 1h1m52 0h1m17 0h1m38 0h1m279 0h1m33 0h1m4 0h2m16 0h1m52 0h1m-502 1h1m52 0h1m17 0h1m38 0h1m281 0h1m31 0h1m6 0h1m17 0h1m52 0h1m-503 1h1m51 0h1m18 0h1m37 0h1m283 0h1m28 0h2m7 0h1m18 0h1m51 0h1m-504 1h1m52 0h1m17 0h1m37 0h1m285 0h1m26 0h1m10 0h1m17 0h1m52 0h1m-505 1h1m51 0h2m16 0h1m37 0h1m249 0h1m37 0h1m24 0h1m12 0h1m17 0h1m51 0h1m-506 1h1m51 0h1m2 0h2m13 0h1m37 0h1m249 0h1m39 0h1m21 0h2m14 0h1m17 0h1m51 0h1m-507 1h1m50 0h1m5 0h1m11 0h1m37 0h1m249 0h1m41 0h1m19 0h1m17 0h1m17 0h1m50 0h1m-508 1h1m51 0h1m6 0h2m9 0h1m37 0h1m248 0h1m42 0h1m18 0h1m18 0h1m17 0h1m51 0h1m-509 1h1m50 0h1m9 0h2m6 0h1m37 0h1m248 0h1m44 0h1m15 0h2m20 0h1m17 0h1m50 0h1m-510 1h1m50 0h1m12 0h1m4 0h1m37 0h1m249 0h1m45 0h1m13 0h1m23 0h1m15 0h1m1 0h1m50 0h1m-511 1h1m50 0h1m13 0h2m1 0h1m37 0h1m249 0h1m47 0h1m11 0h1m25 0h1m12 0h2m2 0h1m50 0h1m-511 1h1m49 0h1m16 0h2m36 0h1m249 0h1m49 0h1m8 0h2m26 0h1m11 0h1m5 0h1m49 0h1m-512 1h1m50 0h1m16 0h1m36 0h1m249 0h1m51 0h1m6 0h1m29 0h1m8 0h2m6 0h1m50 0h1m-513 1h1m49 0h1m17 0h1m36 0h1m248 0h1m52 0h1m5 0h1m30 0h1m6 0h2m9 0h1m49 0h1m-514 1h1m50 0h1m16 0h1m36 0h1m303 0h1m2 0h2m32 0h1m4 0h1m11 0h1m50 0h1m-515 1h1m49 0h1m17 0h1m35 0h1m305 0h2m34 0h1m2 0h2m13 0h1m49 0h1m-516 1h1m49 0h1m17 0h1m35 0h1m306 0h2m35 0h2m16 0h1m49 0h1m-517 1h1m49 0h1m16 0h1m35 0h1m309 0h1m35 0h1m16 0h1m49 0h1m-518 1h1m49 0h1m17 0h1m35 0h1m309 0h1m35 0h1m17 0h1m49 0h1m-519 1h1m49 0h1m16 0h1m35 0h1m311 0h1m35 0h1m16 0h1m49 0h1m-519 1h1m48 0h1m16 0h1m35 0h1m313 0h1m35 0h1m16 0h1m48 0h1m-520 1h1m49 0h1m16 0h1m34 0h1m315 0h1m34 0h1m16 0h1m49 0h1m-521 1h1m48 0h1m1 0h1m14 0h1m35 0h1m315 0h1m35 0h1m16 0h1m48 0h1m-522 1h1m48 0h1m3 0h2m11 0h1m35 0h1m317 0h1m35 0h1m16 0h1m48 0h1m-523 1h1m48 0h1m5 0h2m9 0h1m34 0h1m319 0h1m34 0h1m16 0h1m48 0h1m-524 1h1m48 0h1m8 0h2m6 0h1m35 0h1m319 0h1m35 0h1m16 0h1m48 0h1m-525 1h1m48 0h1m10 0h2m4 0h1m34 0h1m321 0h1m34 0h1m16 0h1m48 0h1m-526 1h1m48 0h1m13 0h2m1 0h1m34 0h1m323 0h1m34 0h1m14 0h1m1 0h1m48 0h1m-527 1h1m48 0h1m15 0h2m34 0h1m323 0h1m34 0h1m12 0h2m2 0h1m48 0h1m-527 1h1m47 0h1m16 0h1m34 0h1m325 0h1m34 0h1m9 0h2m5 0h1m46 0h2m-528 1h1m48 0h1m16 0h1m34 0h1m325 0h1m34 0h1m7 0h2m7 0h1m44 0h2m2 0h1m-529 1h1m48 0h1m15 0h1m34 0h1m327 0h1m34 0h1m4 0h2m9 0h1m41 0h3m4 0h1m-530 1h1m48 0h1m16 0h3m31 0h1m329 0h1m33 0h1m2 0h2m12 0h1m38 0h2m8 0h1m-531 1h1m48 0h1m15 0h1m3 0h2m29 0h1m329 0h1m34 0h2m14 0h1m36 0h2m10 0h1m-532 1h1m48 0h1m16 0h1m5 0h2m26 0h1m331 0h1m33 0h1m16 0h1m32 0h3m13 0h1m-533 1h1m48 0h1m15 0h1m8 0h2m23 0h1m333 0h1m33 0h1m15 0h1m30 0h2m16 0h1m-534 1h1m48 0h1m16 0h1m10 0h2m21 0h1m333 0h1m33 0h1m16 0h1m26 0h3m19 0h1m-535 1h1m48 0h1m15 0h1m13 0h2m18 0h1m335 0h1m33 0h1m15 0h1m24 0h2m22 0h1m-535 1h1m47 0h1m16 0h1m15 0h2m15 0h1m337 0h1m32 0h1m16 0h1m21 0h2m24 0h1m-536 1h1m48 0h1m15 0h1m18 0h2m13 0h1m337 0h1m33 0h1m15 0h1m18 0h3m27 0h1m-537 1h1m47 0h1m1 0h1m14 0h1m20 0h2m10 0h1m339 0h1m32 0h1m16 0h1m15 0h2m30 0h1m-537 1h1m47 0h1m2 0h2m11 0h1m23 0h2m8 0h1m339 0h1m33 0h1m15 0h1m12 0h3m32 0h1m-538 1h1m47 0h1m5 0h2m9 0h1m25 0h2m5 0h1m341 0h1m32 0h1m16 0h1m9 0h2m36 0h1m-539 1h1m47 0h1m7 0h2m6 0h1m28 0h2m3 0h1m341 0h1m33 0h1m15 0h1m7 0h2m38 0h1m-539 1h1m46 0h1m10 0h2m4 0h1m30 0h3m343 0h1m32 0h1m16 0h1m3 0h3m40 0h1m-539 1h1m46 0h1m12 0h2m1 0h1m33 0h1m343 0h1m33 0h1m15 0h1m1 0h2m43 0h1m-540 1h1m47 0h1m14 0h2m32 0h1m345 0h1m32 0h1m13 0h4m46 0h1m-541 1h1m46 0h1m15 0h1m33 0h1m345 0h1m33 0h1m10 0h2m3 0h1m46 0h1m-541 1h1m46 0h1m15 0h1m32 0h1m347 0h1m32 0h1m7 0h3m5 0h1m46 0h1m-542 1h1m46 0h1m15 0h1m33 0h1m347 0h1m33 0h1m4 0h2m9 0h1m46 0h1m-543 1h1m46 0h1m15 0h1m32 0h1m349 0h1m32 0h1m2 0h2m11 0h1m46 0h1m-543 1h1m46 0h1m15 0h1m32 0h1m349 0h1m32 0h3m13 0h1m46 0h1m-544 1h1m46 0h1m15 0h1m32 0h1m351 0h1m32 0h1m15 0h1m46 0h1m-545 1h1m46 0h1m15 0h1m32 0h1m351 0h1m32 0h1m15 0h1m46 0h1m-545 1h1m46 0h1m15 0h1m31 0h1m353 0h1m31 0h1m15 0h1m46 0h1m-546 1h1m46 0h1m16 0h1m31 0h1m353 0h1m31 0h1m16 0h1m46 0h1m-547 1h1m46 0h1m15 0h1m32 0h1m353 0h1m32 0h1m15 0h1m46 0h1m-547 1h1m46 0h1m15 0h1m31 0h1m355 0h1m31 0h1m15 0h1m46 0h1m-548 1h1m47 0h1m15 0h1m31 0h1m355 0h1m31 0h1m15 0h1m47 0h1m-549 1h1m46 0h1m16 0h1m30 0h1m357 0h1m30 0h1m16 0h1m46 0h1m-549 1h1m46 0h3m13 0h1m31 0h1m357 0h1m31 0h1m15 0h1m46 0h1m-550 1h1m47 0h1m2 0h3m10 0h1m30 0h1m359 0h1m30 0h1m15 0h1m47 0h1m-551 1h1m46 0h1m6 0h4m5 0h1m31 0h1m359 0h1m31 0h1m15 0h1m46 0h1m-551 1h1m46 0h1m10 0h3m2 0h1m31 0h1m359 0h1m31 0h1m15 0h1m46 0h1m-551 1h1m45 0h1m14 0h2m31 0h1m361 0h1m31 0h1m15 0h1m45 0h1m-552 1h1m46 0h1m15 0h1m31 0h1m361 0h1m31 0h1m15 0h1m46 0h1m-553 1h1m46 0h1m15 0h1m31 0h1m361 0h1m31 0h1m12 0h2m1 0h1m46 0h1m-553 1h1m45 0h1m15 0h1m31 0h1m363 0h1m31 0h1m8 0h3m4 0h1m45 0h1m-553 1h1m45 0h1m15 0h1m31 0h1m363 0h1m31 0h1m5 0h3m7 0h1m45 0h1m-554 1h1m46 0h1m15 0h1m31 0h1m363 0h1m31 0h1m2 0h3m10 0h1m46 0h1m-555 1h1m46 0h1m15 0h1m30 0h1m365 0h1m30 0h3m13 0h1m46 0h1m-555 1h1m45 0h1m15 0h1m31 0h1m365 0h1m31 0h1m15 0h1m45 0h1m-555 1h1m45 0h1m15 0h1m31 0h1m365 0h1m31 0h1m15 0h1m45 0h1m-556 1h1m46 0h1m15 0h1m30 0h1m367 0h1m30 0h1m15 0h1m46 0h1m-557 1h1m46 0h1m15 0h1m30 0h1m367 0h1m30 0h1m15 0h1m46 0h1m-557 1h1m45 0h1m15 0h1m31 0h1m367 0h1m31 0h1m15 0h1m45 0h1m-557 1h1m45 0h1m15 0h1m30 0h1m369 0h1m30 0h1m15 0h1m45 0h1m-557 1h1m45 0h1m15 0h1m30 0h1m369 0h1m30 0h1m15 0h1m45 0h1m-558 1h1m46 0h1m15 0h1m30 0h1m369 0h1m30 0h1m15 0h1m46 0h1m-559 1h1m45 0h1m15 0h1m31 0h1m369 0h1m31 0h1m15 0h1m45 0h1m-559 1h1m45 0h1m1 0h2m12 0h1m30 0h1m371 0h1m30 0h1m15 0h1m45 0h1m-559 1h1m45 0h1m3 0h4m8 0h1m30 0h1m371 0h1m30 0h1m15 0h1m45 0h1m-559 1h1m45 0h1m7 0h4m3 0h1m31 0h1m371 0h1m31 0h1m14 0h1m45 0h1m-560 1h1m45 0h1m12 0h4m30 0h1m373 0h1m30 0h1m15 0h1m45 0h1m-561 1h1m45 0h1m15 0h1m30 0h1m373 0h1m30 0h1m15 0h1m45 0h1m-561 1h1m45 0h1m15 0h1m30 0h1m373 0h1m30 0h1m15 0h1m45 0h1m-561 1h1m45 0h1m14 0h1m30 0h1m375 0h1m30 0h1m11 0h4m45 0h1m-561 1h1m45 0h1m14 0h1m30 0h1m375 0h1m30 0h1m7 0h4m3 0h1m45 0h1m-561 1h1m45 0h1m14 0h1m30 0h1m375 0h1m30 0h1m3 0h4m7 0h1m45 0h1m-561 1h1m44 0h1m15 0h1m29 0h1m377 0h1m29 0h4m12 0h1m44 0h1m-562 1h1m45 0h1m14 0h1m30 0h1m377 0h1m30 0h1m14 0h1m45 0h1m-563 1h1m45 0h1m14 0h1m30 0h1m377 0h1m30 0h1m14 0h1m45 0h1m-563 1h1m45 0h1m14 0h1m30 0h1m377 0h1m30 0h1m14 0h1m45 0h1m-563 1h1m45 0h1m14 0h1m29 0h1m379 0h1m29 0h1m14 0h1m45 0h1m-563 1h4m42 0h1m13 0h1m30 0h1m379 0h1m30 0h1m13 0h1m45 0h1m-563 1h1m3 0h8m33 0h1m14 0h1m30 0h1m379 0h1m30 0h1m14 0h1m44 0h1m-563 1h1m11 0h7m26 0h1m14 0h1m30 0h1m379 0h1m30 0h1m14 0h1m44 0h1m-563 1h1m18 0h8m18 0h1m14 0h1m30 0h1m379 0h1m30 0h1m14 0h1m44 0h1m-563 1h1m26 0h7m11 0h1m14 0h1m29 0h1m381 0h1m29 0h1m14 0h1m44 0h1m-563 1h1m33 0h8m2 0h1m15 0h1m29 0h1m381 0h1m29 0h1m15 0h1m43 0h1m-564 1h1m42 0h8m9 0h1m30 0h1m381 0h1m30 0h1m14 0h1m44 0h1m-565 1h1m44 0h1m5 0h6m3 0h1m30 0h1m381 0h1m30 0h1m14 0h1m44 0h1m-565 1h1m44 0h1m11 0h4m30 0h1m381 0h1m30 0h1m14 0h1m44 0h1m-565 1h1m44 0h1m14 0h1m30 0h1m381 0h1m30 0h1m14 0h1m44 0h1m-565 1h1m44 0h1m14 0h1m29 0h1m383 0h1m29 0h1m14 0h1m44 0h1m-565 1h1m43 0h1m15 0h1m29 0h1m383 0h1m29 0h1m15 0h1m43 0h1m-565 1h1m43 0h1m15 0h1m29 0h1m383 0h1m29 0h1m15 0h1m43 0h1m-565 1h1m43 0h1m14 0h1m30 0h1m383 0h1m30 0h1m6 0h7m1 0h1m43 0h1m-565 1h1m43 0h1m14 0h1m30 0h1m383 0h1m30 0h7m8 0h1m43 0h1m-565 1h1m43 0h1m14 0h1m30 0h1m383 0h1m30 0h1m14 0h1m43 0h1m-566 1h1m44 0h1m14 0h1m30 0h1m383 0h1m30 0h1m14 0h1m44 0h1m-567 1h1m44 0h1m14 0h1m29 0h1m385 0h1m29 0h1m14 0h1m44 0h1m-567 1h1m44 0h1m14 0h1m29 0h1m385 0h1m29 0h1m14 0h1m44 0h1m-567 1h1m44 0h1m14 0h1m29 0h1m385 0h1m29 0h1m14 0h1m44 0h1m-567 1h1m44 0h1m14 0h1m29 0h1m385 0h1m29 0h1m14 0h1m44 0h1m-567 1h1m44 0h1m14 0h1m29 0h1m385 0h1m29 0h1m14 0h1m44 0h1m-567 1h1m44 0h1m14 0h1m29 0h1m385 0h1m29 0h1m14 0h1m44 0h1m-567 1h1m44 0h1m14 0h1m29 0h1m385 0h1m29 0h1m14 0h1m44 0h1m-567 1h1m44 0h1m14 0h1m28 0h1m387 0h1m28 0h1m14 0h1m44 0h1m-567 1h1m44 0h1m14 0h1m28 0h1m387 0h1m28 0h1m14 0h1m44 0h1m-568 1h1m45 0h1m14 0h1m28 0h1m387 0h1m28 0h1m14 0h1m45 0h1m-569 1h1m45 0h8m7 0h1m28 0h1m387 0h1m28 0h1m14 0h1m45 0h1m-569 1h1m44 0h1m8 0h8m28 0h1m387 0h1m28 0h1m15 0h1m44 0h1m-569 1h1m44 0h1m14 0h1m29 0h1m387 0h1m29 0h1m14 0h1m44 0h1m-569 1h1m44 0h1m14 0h1m29 0h1m387 0h1m29 0h1m14 0h1m44 0h1m-569 1h1m44 0h1m14 0h1m29 0h1m387 0h1m29 0h1m14 0h1m44 0h1m-569 1h1m44 0h1m14 0h1m29 0h1m387 0h1m29 0h1m14 0h1m44 0h1m-569 1h1m44 0h1m14 0h1m29 0h1m387 0h1m29 0h1m6 0h7m1 0h1m44 0h1m-569 1h1m44 0h1m14 0h1m29 0h1m387 0h1m29 0h7m8 0h1m44 0h1m-569 1h1m44 0h1m14 0h1m29 0h1m387 0h1m29 0h1m14 0h1m44 0h1m-569 1h1m44 0h1m14 0h1m29 0h1m387 0h1m29 0h1m14 0h1m44 0h1m-569 1h1m44 0h1m14 0h1m29 0h1m387 0h1m29 0h1m14 0h1m44 0h1m-569 1h1m44 0h1m14 0h1m29 0h1m387 0h1m29 0h1m14 0h1m44 0h1m-569 1h1m44 0h1m14 0h1m29 0h1m387 0h1m29 0h1m14 0h1m44 0h1m-569 1h1m44 0h1m14 0h31m25 0h13m349 0h31m14 0h1m44 0h1m-569 1h1m44 0h1m14 0h1m29 0h1m387 0h1m29 0h1m14 0h1m44 0h1m-569 1h1m44 0h1m14 0h1m29 0h1m387 0h1m29 0h1m14 0h1m44 0h1m-569 1h1m44 0h1m14 0h1m29 0h1m387 0h1m29 0h1m14 0h1m44 0h1m-569 1h1m44 0h1m14 0h1m29 0h1m387 0h1m29 0h1m14 0h1m44 0h1m-569 1h1m44 0h1m14 0h1m29 0h1m387 0h1m29 0h1m14 0h1m44 0h1m-569 1h1m44 0h1m7 0h8m29 0h1m387 0h1m29 0h1m14 0h1m44 0h1m-569 1h1m44 0h1m1 0h6m7 0h1m29 0h1m387 0h1m29 0h1m14 0h1m44 0h1m-569 1h1m44 0h1m14 0h1m29 0h1m387 0h1m29 0h1m14 0h1m44 0h1m-569 1h1m44 0h1m14 0h1m29 0h1m387 0h1m29 0h1m14 0h1m44 0h1m-569 1h1m44 0h1m14 0h1m29 0h1m387 0h1m29 0h1m14 0h1m44 0h1m-569 1h1m44 0h1m15 0h1m28 0h1m387 0h1m28 0h1m15 0h1m44 0h1m-569 1h1m45 0h1m14 0h1m28 0h1m387 0h1m28 0h8m7 0h1m45 0h1m-569 1h1m45 0h1m14 0h1m28 0h1m387 0h1m28 0h1m7 0h8m45 0h1m-568 1h1m44 0h1m14 0h1m28 0h1m387 0h1m28 0h1m14 0h1m44 0h1m-567 1h1m44 0h1m14 0h1m28 0h1m387 0h1m28 0h1m14 0h1m44 0h1m-567 1h1m44 0h1m14 0h1m28 0h1m387 0h1m28 0h1m14 0h1m44 0h1m-567 1h1m44 0h1m14 0h1m29 0h1m385 0h1m29 0h1m14 0h1m44 0h1m-567 1h1m44 0h1m14 0h1m29 0h1m385 0h1m29 0h1m14 0h1m44 0h1m-567 1h1m44 0h1m14 0h1m29 0h1m385 0h1m29 0h1m14 0h1m44 0h1m-567 1h1m44 0h1m14 0h1m29 0h1m385 0h1m29 0h1m14 0h1m44 0h1m-567 1h1m44 0h1m14 0h1m29 0h1m385 0h1m29 0h1m14 0h1m44 0h1m-567 1h1m44 0h1m14 0h1m29 0h1m385 0h1m29 0h1m14 0h1m44 0h1m-567 1h1m44 0h1m14 0h1m29 0h1m385 0h1m29 0h1m14 0h1m44 0h1m-566 1h1m43 0h1m14 0h1m30 0h1m383 0h1m30 0h1m14 0h1m43 0h1m-565 1h1m43 0h1m14 0h1m30 0h1m383 0h1m30 0h1m14 0h1m43 0h1m-565 1h1m43 0h1m8 0h7m30 0h1m383 0h1m30 0h1m14 0h1m43 0h1m-565 1h1m43 0h1m1 0h7m7 0h1m29 0h1m383 0h1m29 0h1m15 0h1m43 0h1m-565 1h1m43 0h1m15 0h1m29 0h1m383 0h1m29 0h1m15 0h1m43 0h1m-565 1h1m44 0h1m14 0h1m29 0h1m383 0h1m29 0h1m14 0h1m44 0h1m-565 1h1m44 0h1m14 0h1m30 0h1m381 0h1m30 0h1m14 0h1m44 0h1m-565 1h1m44 0h1m14 0h1m30 0h1m381 0h1m30 0h1m14 0h1m44 0h1m-565 1h1m44 0h1m14 0h1m30 0h1m381 0h1m30 0h4m11 0h1m44 0h1m-565 1h1m44 0h1m14 0h1m30 0h1m381 0h1m30 0h1m3 0h6m5 0h1m44 0h1m-564 1h1m43 0h1m14 0h1m30 0h1m381 0h1m30 0h1m9 0h8m41 0h1m-563 1h1m44 0h1m14 0h1m29 0h1m381 0h1m29 0h1m14 0h1m3 0h8m33 0h1m-563 1h1m44 0h1m14 0h1m29 0h1m381 0h1m29 0h1m14 0h1m11 0h7m26 0h1m-563 1h1m44 0h1m14 0h1m30 0h1m379 0h1m30 0h1m14 0h1m18 0h8m18 0h1m-563 1h1m44 0h1m14 0h1m30 0h1m379 0h1m30 0h1m14 0h1m26 0h7m11 0h1m-563 1h1m45 0h1m13 0h1m30 0h1m379 0h1m30 0h1m13 0h1m34 0h8m3 0h1m-563 1h1m45 0h1m14 0h1m29 0h1m379 0h1m29 0h1m14 0h1m42 0h4m-563 1h1m45 0h1m14 0h1m29 0h1m379 0h1m29 0h1m14 0h1m45 0h1m-563 1h1m45 0h1m14 0h1m30 0h1m377 0h1m30 0h1m14 0h1m45 0h1m-563 1h1m45 0h1m14 0h1m30 0h1m377 0h1m30 0h1m14 0h1m45 0h1m-562 1h1m44 0h1m15 0h1m29 0h1m377 0h1m29 0h1m15 0h1m44 0h1m-561 1h1m45 0h1m11 0h4m29 0h1m377 0h1m29 0h1m14 0h1m45 0h1m-561 1h1m45 0h1m7 0h4m3 0h1m30 0h1m375 0h1m30 0h1m14 0h1m45 0h1m-561 1h1m45 0h1m3 0h4m7 0h1m30 0h1m375 0h1m30 0h1m14 0h1m45 0h1m-561 1h1m45 0h4m12 0h1m29 0h1m375 0h1m29 0h1m15 0h1m45 0h1m-561 1h1m45 0h1m15 0h1m30 0h1m373 0h1m30 0h1m15 0h1m45 0h1m-561 1h1m45 0h1m15 0h1m30 0h1m373 0h1m30 0h1m15 0h1m45 0h1m-561 1h1m46 0h1m14 0h1m30 0h1m373 0h1m30 0h3m12 0h1m46 0h1m-560 1h1m45 0h1m15 0h1m30 0h1m371 0h1m30 0h1m3 0h4m8 0h1m45 0h1m-559 1h1m45 0h1m15 0h1m30 0h1m371 0h1m30 0h1m7 0h4m4 0h1m45 0h1m-559 1h1m45 0h1m15 0h1m30 0h1m371 0h1m30 0h1m11 0h3m1 0h1m45 0h1m-559 1h1m46 0h1m14 0h1m31 0h1m369 0h1m31 0h1m14 0h1m46 0h1m-559 1h1m46 0h1m15 0h1m30 0h1m369 0h1m30 0h1m15 0h1m46 0h1m-558 1h1m45 0h1m15 0h1m30 0h1m369 0h1m30 0h1m15 0h1m45 0h1m-557 1h1m45 0h1m15 0h1m30 0h1m369 0h1m30 0h1m15 0h1m45 0h1m-557 1h1m45 0h1m15 0h1m31 0h1m367 0h1m31 0h1m15 0h1m45 0h1m-557 1h1m46 0h1m15 0h1m30 0h1m367 0h1m30 0h1m15 0h1m46 0h1m-557 1h1m46 0h1m15 0h1m30 0h1m367 0h1m30 0h1m15 0h1m46 0h1m-556 1h1m45 0h1m15 0h1m31 0h1m365 0h1m31 0h1m15 0h1m45 0h1m-555 1h1m45 0h1m16 0h1m30 0h1m365 0h1m30 0h1m16 0h1m45 0h1m-555 1h1m46 0h1m13 0h3m30 0h1m365 0h1m30 0h1m15 0h1m46 0h1m-555 1h1m46 0h1m10 0h3m2 0h1m31 0h1m363 0h1m31 0h1m15 0h1m46 0h1m-554 1h1m45 0h1m7 0h3m5 0h1m31 0h1m363 0h1m31 0h1m15 0h1m45 0h1m-553 1h1m45 0h1m4 0h3m9 0h1m30 0h1m363 0h1m30 0h1m16 0h1m45 0h1m-553 1h1m46 0h1m1 0h2m12 0h1m31 0h1m361 0h1m31 0h1m15 0h1m46 0h1m-553 1h1m46 0h1m15 0h1m31 0h1m319 0h2m40 0h1m31 0h1m15 0h1m46 0h1m-552 1h1m46 0h1m14 0h1m31 0h1m321 0h2m38 0h1m31 0h2m13 0h1m46 0h1m-551 1h1m46 0h1m15 0h1m31 0h1m322 0h2m35 0h1m31 0h1m2 0h3m10 0h1m46 0h1m-551 1h1m46 0h1m15 0h1m31 0h1m324 0h2m33 0h1m31 0h1m5 0h4m6 0h1m46 0h1m-550 1h1m46 0h1m15 0h1m30 0h1m326 0h2m31 0h1m30 0h1m10 0h3m2 0h1m46 0h1m-549 1h1m46 0h1m15 0h1m31 0h1m327 0h2m28 0h1m31 0h1m13 0h3m46 0h1m-549 1h1m46 0h1m16 0h1m30 0h1m357 0h1m30 0h1m16 0h1m46 0h1m-549 1h1m47 0h1m15 0h1m31 0h1m355 0h1m31 0h1m15 0h1m47 0h1m-548 1h1m46 0h1m15 0h1m31 0h1m355 0h1m31 0h1m15 0h1m46 0h1m-547 1h1m46 0h1m16 0h1m31 0h1m353 0h1m31 0h1m16 0h1m46 0h1m-547 1h1m46 0h1m16 0h1m31 0h1m353 0h1m31 0h1m16 0h1m46 0h1m-546 1h1m46 0h1m15 0h1m32 0h1m351 0h1m32 0h1m15 0h1m46 0h1m-545 1h1m46 0h1m15 0h1m32 0h1m351 0h1m32 0h1m15 0h1m46 0h1m-545 1h1m46 0h1m16 0h1m32 0h1m349 0h1m32 0h1m16 0h1m46 0h1m-544 1h1m46 0h1m13 0h3m32 0h1m349 0h1m32 0h1m15 0h1m46 0h1m-543 1h1m46 0h1m11 0h2m2 0h1m33 0h1m347 0h1m33 0h1m15 0h1m46 0h1m-543 1h1m47 0h1m7 0h3m4 0h1m33 0h1m347 0h1m33 0h1m14 0h1m47 0h1m-542 1h1m46 0h1m5 0h2m8 0h1m33 0h1m345 0h1m33 0h1m15 0h1m46 0h1m-541 1h1m46 0h1m3 0h2m10 0h1m33 0h1m345 0h1m33 0h1m15 0h1m46 0h1m-541 1h1m46 0h4m13 0h1m33 0h1m343 0h1m33 0h1m15 0h1m47 0h1m-540 1h1m43 0h2m1 0h1m15 0h1m33 0h1m343 0h1m33 0h3m13 0h1m46 0h1m-539 1h1m40 0h3m4 0h1m15 0h1m33 0h1m341 0h1m1 0h2m30 0h1m3 0h2m10 0h1m47 0h1m-539 1h1m38 0h2m7 0h1m15 0h1m33 0h1m341 0h1m3 0h2m28 0h1m5 0h2m8 0h1m47 0h1m-538 1h1m35 0h2m10 0h1m15 0h1m33 0h1m339 0h1m6 0h2m25 0h1m8 0h2m5 0h1m47 0h1m-537 1h1m32 0h3m12 0h1m15 0h1m33 0h1m339 0h1m8 0h2m23 0h1m10 0h2m3 0h1m47 0h1m-537 1h1m30 0h2m16 0h1m15 0h1m33 0h1m337 0h1m11 0h2m20 0h1m13 0h3m48 0h1m-537 1h1m27 0h3m18 0h1m15 0h1m33 0h1m337 0h1m13 0h2m18 0h1m15 0h1m48 0h1m-536 1h1m24 0h2m22 0h1m15 0h1m33 0h1m335 0h1m16 0h2m15 0h1m15 0h1m48 0h1m-535 1h1m22 0h2m24 0h1m15 0h1m33 0h1m335 0h1m18 0h2m13 0h1m15 0h1m48 0h1m-535 1h1m19 0h3m26 0h1m16 0h1m33 0h1m333 0h1m21 0h2m10 0h1m16 0h1m48 0h1m-534 1h1m16 0h2m30 0h1m15 0h1m33 0h1m333 0h1m23 0h2m8 0h1m15 0h1m48 0h1m-533 1h1m13 0h3m32 0h1m16 0h1m33 0h1m331 0h1m26 0h2m5 0h1m16 0h1m48 0h1m-532 1h1m10 0h2m36 0h1m14 0h2m34 0h1m329 0h1m29 0h2m3 0h1m15 0h1m48 0h1m-531 1h1m8 0h2m38 0h1m12 0h2m2 0h1m33 0h1m329 0h1m31 0h3m16 0h1m48 0h1m-530 1h1m4 0h3m41 0h1m9 0h2m4 0h1m34 0h1m327 0h1m34 0h1m15 0h1m48 0h1m-529 1h1m2 0h2m44 0h1m7 0h2m7 0h1m34 0h1m325 0h1m34 0h1m16 0h1m48 0h1m-528 1h2m47 0h1m4 0h2m9 0h1m34 0h1m325 0h1m34 0h1m15 0h1m48 0h1m-527 1h1m48 0h1m2 0h2m12 0h1m34 0h1m323 0h1m34 0h2m15 0h1m48 0h1m-527 1h1m49 0h2m14 0h1m34 0h1m323 0h1m34 0h1m1 0h2m12 0h1m49 0h1m-526 1h1m48 0h1m16 0h1m34 0h1m321 0h1m34 0h1m4 0h2m10 0h1m48 0h1m-525 1h1m49 0h1m15 0h1m35 0h1m319 0h1m35 0h1m6 0h2m7 0h1m49 0h1m-524 1h1m48 0h1m16 0h1m34 0h1m319 0h1m34 0h1m9 0h2m5 0h1m48 0h1m-523 1h1m49 0h1m15 0h1m35 0h1m317 0h1m35 0h1m11 0h2m2 0h1m49 0h1m-522 1h1m48 0h1m16 0h1m35 0h1m315 0h1m35 0h1m14 0h1m1 0h1m48 0h1m-521 1h1m49 0h1m16 0h1m34 0h1m315 0h1m34 0h1m16 0h1m49 0h1m-520 1h1m48 0h1m16 0h1m35 0h1m313 0h1m35 0h1m16 0h1m48 0h1m-519 1h1m49 0h1m16 0h1m35 0h1m311 0h1m35 0h1m16 0h1m49 0h1m-519 1h1m49 0h1m17 0h1m35 0h1m309 0h1m35 0h1m17 0h1m49 0h1m-518 1h1m49 0h1m16 0h1m35 0h1m309 0h1m35 0h1m16 0h1m49 0h1m-517 1h1m49 0h1m16 0h2m35 0h2m306 0h1m35 0h1m17 0h1m49 0h1m-516 1h1m49 0h1m13 0h2m2 0h1m33 0h3m305 0h1m35 0h1m17 0h1m49 0h1m-515 1h1m50 0h1m11 0h1m4 0h1m32 0h1m3 0h1m303 0h1m36 0h1m16 0h1m50 0h1m-514 1h1m49 0h1m9 0h2m6 0h1m30 0h1m5 0h1m301 0h1m36 0h1m17 0h1m49 0h1m-513 1h1m50 0h1m6 0h2m8 0h1m28 0h2m7 0h1m299 0h1m37 0h1m16 0h1m50 0h1m-512 1h1m49 0h1m5 0h1m11 0h1m26 0h1m9 0h1m299 0h1m36 0h2m16 0h1m49 0h1m-511 1h1m50 0h1m2 0h2m12 0h1m25 0h1m11 0h1m297 0h1m37 0h1m1 0h2m13 0h1m50 0h1m-511 1h1m50 0h1m1 0h1m15 0h1m22 0h2m13 0h1m295 0h1m37 0h1m4 0h1m12 0h1m50 0h1m-510 1h1m50 0h1m17 0h1m20 0h1m16 0h1m293 0h1m37 0h1m6 0h2m9 0h1m50 0h1m-509 1h1m51 0h1m17 0h1m18 0h1m18 0h1m291 0h1m37 0h1m9 0h2m6 0h1m51 0h1m-508 1h1m50 0h1m18 0h1m15 0h2m19 0h1m291 0h1m36 0h1m12 0h1m5 0h1m50 0h1m-507 1h1m51 0h1m17 0h1m14 0h1m22 0h1m289 0h1m37 0h1m13 0h2m2 0h1m51 0h1m-506 1h1m51 0h1m17 0h1m12 0h1m24 0h1m287 0h1m37 0h1m16 0h2m51 0h1m-505 1h1m52 0h1m17 0h1m9 0h2m26 0h1m285 0h1m37 0h1m17 0h1m52 0h1m-504 1h1m51 0h1m18 0h1m7 0h1m29 0h1m283 0h1m37 0h1m18 0h1m51 0h1m-503 1h1m52 0h1m17 0h1m6 0h1m31 0h1m281 0h1m38 0h1m17 0h1m52 0h1m-502 1h1m52 0h1m16 0h2m3 0h2m33 0h1m279 0h1m38 0h1m17 0h1m52 0h1m-501 1h1m52 0h1m15 0h1m2 0h1m1 0h1m36 0h1m277 0h1m38 0h1m18 0h1m52 0h1m-500 1h1m52 0h1m12 0h2m4 0h1m38 0h1m275 0h1m38 0h1m18 0h1m52 0h1m-499 1h1m53 0h1m10 0h1m6 0h1m39 0h1m273 0h1m39 0h1m17 0h1m53 0h1m-498 1h1m53 0h1m8 0h1m8 0h1m39 0h1m271 0h1m39 0h1m17 0h1m53 0h1m-497 1h1m53 0h1m7 0h1m10 0h1m39 0h1m269 0h1m39 0h2m17 0h1m53 0h1m-496 1h1m53 0h1m4 0h2m12 0h1m39 0h1m267 0h1m39 0h1m2 0h1m15 0h1m53 0h1m-495 1h1m54 0h1m2 0h1m15 0h1m39 0h1m265 0h1m39 0h1m4 0h2m12 0h1m54 0h1m-494 1h1m53 0h1m1 0h1m16 0h1m40 0h1m263 0h1m40 0h1m6 0h1m11 0h1m53 0h1m-492 1h1m53 0h1m18 0h1m40 0h1m261 0h1m40 0h1m8 0h1m9 0h1m53 0h1m-491 1h1m54 0h1m18 0h1m40 0h1m259 0h1m40 0h1m10 0h1m7 0h1m54 0h1m-490 1h1m54 0h1m18 0h1m40 0h1m257 0h1m40 0h1m12 0h2m4 0h1m54 0h1m-488 1h1m53 0h1m19 0h1m40 0h2m253 0h2m40 0h1m15 0h1m3 0h1m53 0h1m-487 1h1m54 0h1m19 0h1m41 0h1m251 0h1m41 0h1m17 0h1m1 0h1m54 0h1m-486 1h1m54 0h1m18 0h1m42 0h1m249 0h1m42 0h1m18 0h1m54 0h1m-485 1h1m55 0h1m17 0h2m42 0h1m247 0h1m42 0h1m18 0h1m1 0h1m53 0h1m-484 1h1m55 0h1m15 0h1m2 0h1m42 0h1m244 0h2m42 0h1m18 0h1m3 0h2m50 0h1m-482 1h1m54 0h1m14 0h1m4 0h1m42 0h2m241 0h1m43 0h1m19 0h1m5 0h1m48 0h1m-481 1h1m55 0h1m12 0h1m6 0h1m43 0h1m239 0h1m43 0h1m19 0h1m7 0h1m47 0h1m-480 1h1m55 0h1m10 0h1m8 0h1m43 0h1m237 0h2m42 0h1m19 0h1m9 0h2m44 0h1m-478 1h1m55 0h1m8 0h1m10 0h1m43 0h1m235 0h1m2 0h1m40 0h1m1 0h1m17 0h1m12 0h1m42 0h1m-477 1h1m56 0h1m6 0h1m12 0h1m43 0h2m231 0h2m3 0h1m39 0h1m3 0h1m15 0h1m14 0h1m41 0h1m-476 1h1m56 0h1m4 0h1m14 0h1m44 0h1m229 0h1m6 0h1m37 0h1m5 0h1m13 0h1m16 0h2m38 0h1m-474 1h1m55 0h1m3 0h1m16 0h1m44 0h1m227 0h1m8 0h1m35 0h1m7 0h1m12 0h1m18 0h1m36 0h1m-473 1h1m56 0h1m1 0h1m18 0h1m44 0h2m223 0h2m10 0h1m33 0h1m9 0h1m10 0h1m20 0h1m35 0h1m-472 1h1m56 0h1m20 0h1m45 0h1m221 0h1m13 0h1m31 0h1m11 0h1m8 0h1m22 0h2m32 0h1m-470 1h1m56 0h1m20 0h1m45 0h2m217 0h2m14 0h1m30 0h1m13 0h1m6 0h1m25 0h1m30 0h1m-469 1h1m57 0h1m20 0h1m46 0h1m215 0h1m17 0h1m28 0h1m15 0h1m4 0h1m27 0h1m29 0h1m-468 1h1m57 0h1m20 0h1m46 0h2m211 0h2m19 0h1m26 0h1m17 0h1m2 0h1m29 0h2m26 0h1m-466 1h1m57 0h1m20 0h1m47 0h2m207 0h2m22 0h1m24 0h1m19 0h2m32 0h1m24 0h1m-465 1h1m57 0h1m19 0h1m1 0h1m48 0h1m205 0h1m25 0h1m22 0h1m21 0h1m33 0h1m23 0h1m-464 1h1m57 0h1m17 0h1m3 0h1m48 0h2m201 0h2m26 0h1m21 0h1m21 0h1m35 0h2m20 0h1m-463 1h1m58 0h1m15 0h1m5 0h1m49 0h1m199 0h1m29 0h1m19 0h1m21 0h1m38 0h1m19 0h1m-462 1h1m58 0h1m13 0h1m7 0h1m49 0h2m195 0h2m31 0h1m17 0h1m21 0h1m40 0h1m17 0h1m-460 1h1m58 0h1m11 0h1m9 0h1m50 0h1m192 0h2m34 0h1m14 0h3m20 0h1m42 0h2m14 0h1m-458 1h1m58 0h1m9 0h1m11 0h2m49 0h2m188 0h2m36 0h1m13 0h1m3 0h1m18 0h1m45 0h1m12 0h1m-457 1h1m59 0h1m7 0h1m14 0h1m50 0h2m184 0h2m39 0h1m11 0h1m5 0h1m16 0h1m47 0h1m11 0h1m-456 1h1m59 0h1m5 0h1m16 0h1m51 0h2m180 0h2m42 0h1m9 0h1m7 0h1m14 0h1m49 0h2m8 0h1m-454 1h1m59 0h1m3 0h1m18 0h1m52 0h2m176 0h2m45 0h1m7 0h1m9 0h1m12 0h1m52 0h1m6 0h1m-452 1h1m59 0h1m1 0h1m20 0h1m53 0h2m172 0h2m48 0h1m4 0h2m11 0h1m10 0h1m54 0h1m4 0h1m-451 1h1m60 0h1m22 0h2m53 0h2m168 0h2m50 0h1m3 0h1m14 0h1m7 0h2m56 0h2m2 0h1m-450 1h1m60 0h2m22 0h1m54 0h2m164 0h2m53 0h1m1 0h1m16 0h1m5 0h1m60 0h2m-448 1h1m61 0h1m21 0h2m55 0h2m160 0h2m56 0h1m18 0h1m3 0h1m61 0h1m-446 1h1m61 0h1m19 0h1m2 0h2m55 0h3m155 0h2m56 0h2m20 0h1m1 0h1m61 0h1m-444 1h1m61 0h1m17 0h1m5 0h1m57 0h2m151 0h2m57 0h1m23 0h1m61 0h1m-442 1h1m61 0h1m16 0h1m6 0h1m58 0h2m147 0h2m58 0h1m23 0h1m61 0h1m-440 1h1m61 0h2m13 0h1m8 0h2m58 0h3m141 0h3m58 0h3m21 0h2m61 0h1m-438 1h1m62 0h1m11 0h1m11 0h1m60 0h3m135 0h3m60 0h1m3 0h1m19 0h1m62 0h1m-436 1h1m62 0h1m9 0h1m13 0h1m62 0h3m129 0h3m62 0h1m5 0h1m17 0h1m62 0h1m-434 1h1m62 0h1m7 0h1m15 0h1m64 0h3m123 0h3m63 0h2m6 0h1m16 0h1m62 0h1m-432 1h1m62 0h1m6 0h1m16 0h2m65 0h3m117 0h3m65 0h1m9 0h1m14 0h1m62 0h1m-431 1h1m63 0h1m4 0h1m19 0h1m67 0h4m109 0h4m67 0h1m11 0h1m11 0h2m63 0h1m-430 1h1m63 0h2m1 0h1m21 0h1m68 0h1m1 0h3m103 0h3m70 0h1m13 0h1m9 0h1m64 0h1m-428 1h1m64 0h1m23 0h2m65 0h1m5 0h3m97 0h3m71 0h2m15 0h1m7 0h1m64 0h1m-426 1h1m62 0h1m1 0h1m23 0h3m63 0h1m8 0h3m91 0h3m72 0h2m17 0h1m6 0h1m64 0h1m-425 1h1m61 0h1m3 0h2m20 0h1m3 0h2m61 0h1m11 0h4m83 0h4m73 0h2m20 0h1m3 0h2m65 0h1m-424 1h1m60 0h1m5 0h1m19 0h1m5 0h1m59 0h1m16 0h5m73 0h6m75 0h1m23 0h1m1 0h1m66 0h1m-422 1h1m58 0h1m7 0h1m17 0h1m7 0h2m57 0h1m21 0h6m60 0h7m5 0h1m73 0h3m24 0h1m66 0h1m-420 1h1m56 0h1m9 0h2m14 0h1m10 0h1m56 0h1m27 0h7m47 0h6m13 0h1m71 0h1m3 0h1m21 0h2m66 0h1m-418 1h1m54 0h1m12 0h1m13 0h1m11 0h2m54 0h1m34 0h7m33 0h7m19 0h1m69 0h2m4 0h1m20 0h1m67 0h1m-416 1h1m53 0h1m13 0h2m10 0h1m14 0h1m52 0h1m42 0h33m26 0h1m68 0h1m7 0h1m17 0h2m67 0h1m-414 1h1m51 0h1m16 0h1m9 0h1m15 0h2m50 0h1m101 0h1m66 0h2m9 0h1m15 0h1m68 0h1m-412 1h1m49 0h1m18 0h1m7 0h1m18 0h2m48 0h1m102 0h1m63 0h2m11 0h1m14 0h1m68 0h1m-410 1h1m47 0h1m20 0h2m4 0h1m21 0h2m45 0h1m103 0h1m61 0h2m14 0h1m11 0h2m68 0h1m-408 1h1m46 0h1m22 0h1m3 0h1m22 0h3m43 0h1m103 0h1m59 0h2m16 0h1m10 0h1m69 0h1m-406 1h1m44 0h1m24 0h3m22 0h1m3 0h2m41 0h1m103 0h1m57 0h2m19 0h1m7 0h2m69 0h1m-404 1h1m42 0h1m27 0h1m22 0h1m5 0h2m38 0h1m105 0h1m54 0h2m22 0h1m5 0h1m70 0h1m-402 1h1m40 0h1m29 0h1m20 0h1m8 0h2m36 0h1m105 0h1m52 0h2m1 0h1m22 0h1m4 0h1m70 0h1m-400 1h1m39 0h1m30 0h2m18 0h1m10 0h2m34 0h1m105 0h1m50 0h2m4 0h1m22 0h1m1 0h2m70 0h1m-398 1h1m37 0h1m33 0h1m16 0h1m13 0h2m31 0h1m106 0h1m48 0h2m6 0h1m23 0h1m71 0h1m-396 1h1m35 0h1m35 0h2m14 0h1m15 0h2m29 0h1m107 0h1m45 0h2m9 0h1m20 0h2m71 0h1m-394 1h1m33 0h1m38 0h2m11 0h1m18 0h2m27 0h1m107 0h1m43 0h2m11 0h1m18 0h2m72 0h1m-392 1h1m32 0h1m40 0h2m9 0h1m20 0h2m24 0h1m108 0h1m41 0h2m14 0h1m15 0h2m73 0h1m-390 1h1m30 0h1m43 0h1m7 0h1m21 0h1m1 0h2m22 0h1m108 0h1m39 0h2m16 0h1m14 0h1m74 0h1m-388 1h1m28 0h1m45 0h2m5 0h1m21 0h1m3 0h3m19 0h1m109 0h1m34 0h4m19 0h1m11 0h2m74 0h1m-386 1h1m26 0h1m48 0h2m2 0h1m21 0h1m7 0h4m15 0h1m109 0h1m30 0h4m1 0h1m21 0h1m9 0h2m75 0h1m-384 1h1m25 0h1m50 0h2m22 0h1m11 0h4m10 0h1m110 0h1m27 0h3m5 0h1m22 0h1m6 0h2m76 0h1m-382 1h1m23 0h1m53 0h1m20 0h1m16 0h2m8 0h1m110 0h1m25 0h2m9 0h1m21 0h1m4 0h2m77 0h1m-380 1h1m21 0h1m55 0h2m18 0h1m18 0h2m6 0h1m111 0h1m22 0h2m11 0h1m22 0h1m1 0h2m77 0h2m-378 1h2m18 0h1m58 0h2m15 0h1m21 0h3m2 0h1m112 0h1m18 0h4m14 0h1m21 0h2m78 0h1m-374 1h1m17 0h1m60 0h2m13 0h1m21 0h1m2 0h4m111 0h1m14 0h4m18 0h1m19 0h2m79 0h1m-372 1h1m15 0h1m63 0h3m9 0h1m21 0h1m7 0h4m107 0h1m11 0h3m1 0h1m21 0h1m16 0h2m79 0h2m-370 1h2m12 0h1m67 0h2m7 0h1m21 0h1m11 0h4m104 0h1m6 0h4m4 0h1m21 0h1m14 0h2m80 0h1m-366 1h1m10 0h1m70 0h2m4 0h1m22 0h1m15 0h3m101 0h1m2 0h4m9 0h1m20 0h1m12 0h2m81 0h1m-364 1h1m9 0h1m72 0h2m2 0h1m21 0h1m19 0h4m96 0h4m13 0h1m21 0h1m8 0h3m82 0h1m-362 1h1m7 0h1m75 0h2m22 0h1m20 0h1m2 0h4m88 0h4m17 0h1m21 0h1m6 0h2m84 0h1m-360 1h1m5 0h1m78 0h2m20 0h1m20 0h1m6 0h4m80 0h4m1 0h1m20 0h1m21 0h1m3 0h2m85 0h1m-358 1h1m3 0h1m81 0h2m18 0h1m19 0h1m11 0h6m69 0h5m5 0h1m20 0h1m21 0h1m1 0h2m86 0h1m-356 1h1m2 0h1m83 0h3m14 0h1m20 0h1m17 0h7m54 0h8m10 0h1m20 0h1m21 0h2m87 0h1m-354 1h2m87 0h2m12 0h1m20 0h1m19 0h1m4 0h16m22 0h16m19 0h1m20 0h1m17 0h4m87 0h1m-352 1h1m89 0h3m9 0h1m20 0h1m19 0h1m19 0h23m15 0h1m19 0h1m20 0h1m15 0h2m4 0h1m85 0h1m-350 1h1m91 0h3m5 0h1m20 0h1m20 0h1m19 0h1m17 0h1m19 0h1m19 0h1m20 0h1m12 0h3m6 0h1m83 0h2m-348 1h2m92 0h4m1 0h1m20 0h1m19 0h1m20 0h1m17 0h1m19 0h1m19 0h1m21 0h1m7 0h4m10 0h1m81 0h1m-344 1h1m95 0h3m19 0h1m19 0h1m20 0h1m17 0h1m19 0h1m20 0h1m20 0h1m4 0h3m14 0h1m80 0h1m-342 1h1m97 0h2m17 0h1m19 0h1m20 0h1m17 0h1m19 0h1m20 0h1m22 0h3m17 0h1m78 0h2m-340 1h2m97 0h3m13 0h1m20 0h1m20 0h1m17 0h1m19 0h1m20 0h1m20 0h2m21 0h1m76 0h1m-336 1h1m99 0h4m9 0h1m20 0h1m20 0h1m17 0h1m20 0h1m19 0h1m16 0h4m23 0h1m75 0h1m-334 1h2m101 0h4m5 0h1m20 0h1m19 0h1m19 0h1m19 0h1m20 0h1m11 0h4m28 0h1m72 0h2m-331 1h1m104 0h4m21 0h1m20 0h1m19 0h1m19 0h1m20 0h1m6 0h5m32 0h1m70 0h2m-328 1h2m106 0h4m17 0h1m20 0h1m19 0h1m19 0h1m20 0h1m2 0h4m38 0h1m68 0h1m-324 1h2m108 0h6m11 0h1m20 0h1m19 0h1m19 0h1m17 0h6m42 0h1m66 0h2m-321 1h1m113 0h6m5 0h1m20 0h1m19 0h1m19 0h1m11 0h6m48 0h1m65 0h1m-318 1h2m117 0h4m1 0h1m20 0h1m19 0h1m19 0h1m7 0h4m55 0h1m62 0h2m-315 1h1m120 0h6m16 0h1m19 0h1m21 0h6m59 0h1m61 0h1m-312 1h2m119 0h1m4 0h17m24 0h17m66 0h1m58 0h2m-309 1h1m118 0h1m21 0h24m83 0h1m57 0h1m-306 1h2m115 0h1m129 0h1m55 0h2m-303 1h1m114 0h1m130 0h1m53 0h1m-300 1h2m112 0h1m130 0h1m51 0h2m-297 1h1m111 0h1m131 0h1m48 0h2m-294 1h2m109 0h1m131 0h1m47 0h1m-290 1h2m107 0h1m132 0h1m44 0h2m-287 1h1m106 0h1m132 0h1m43 0h1m-284 1h2m104 0h1m132 0h1m41 0h2m-281 1h2m101 0h1m134 0h1m38 0h2m-277 1h2m99 0h1m134 0h1m36 0h2m-273 1h2m97 0h1m135 0h1m33 0h2m-269 1h2m95 0h1m135 0h1m31 0h2m-265 1h2m93 0h1m135 0h1m29 0h2m-261 1h2m91 0h1m136 0h1m26 0h2m-257 1h2m89 0h1m136 0h1m24 0h2m-253 1h3m85 0h1m138 0h1m20 0h3m-248 1h2m83 0h1m138 0h1m18 0h2m-243 1h2m81 0h1m139 0h1m15 0h2m-239 1h2m79 0h1m139 0h1m13 0h2m-235 1h3m76 0h1m139 0h1m10 0h3m-230 1h2m74 0h1m140 0h1m7 0h2m-225 1h2m72 0h1m140 0h1m5 0h2m-221 1h2m70 0h1m141 0h1m2 0h2m-217 1h3m66 0h1m142 0h3m-212 1h2m64 0h1m140 0h2m-207 1h2m62 0h1m138 0h2m-203 1h2m60 0h1m136 0h2m-199 1h3m57 0h1m133 0h3m-194 1h3m54 0h1m129 0h4m-188 1h4m50 0h1m126 0h3m-180 1h3m46 0h1m124 0h3m-174 1h3m43 0h1m121 0h3m-168 1h3m40 0h1m118 0h3m-162 1h3m37 0h1m115 0h3m-156 1h3m34 0h1m111 0h4m-150 1h4m30 0h1m108 0h3m-142 1h4m26 0h1m104 0h4m-135 1h4m22 0h1m100 0h4m-127 1h5m16 0h1m96 0h5m-118 1h5m11 0h1m91 0h5m-108 1h7m4 0h1m83 0h8m-96 1h10m68 0h10m-78 1h10m48 0h10m-58 1h10m28 0h10m-38 1h28"/>
<path stroke="#0000ff" d="M261 30.5h1m3 0h1m3 0h1m-8 1h1m1 0h1m1 0h1m1 0h1m1 0h1m-8 1h1m3 0h1m3 0h1m-9 1h1m3 0h1m3 0h1m-9 1h1m3 0h1m3 0h1m-9 1h1m3 0h1m3 0h1m-9 1h1m3 0h1m3 0h1m-9 1h1m3 0h1m3 0h1m-9 1h1m3 0h1m3 0h1m-9 1h1m3 0h1m3 0h1m-9 1h1m3 0h1m3 0h1m-9 1h1m3 0h1m3 0h1m4 0h1m-14 1h1m3 0h1m3 0h1m3 0h3m-15 1h1m3 0h1m3 0h1m4 0h1m-14 1h1m3 0h1m3 0h1m4 0h1m-5 1h1m2 0h1m-3 1h2m-57 82h1m5 0h1m5 0h1m-13 1h1m5 0h1m5 0h1m-14 1h3m2 0h5m2 0h3m-14 1h1m5 0h1m5 0h1m-13 1h1m5 0h1m5 0h1m-12 1h1m4 0h1m4 0h1m-11 1h1m4 0h1m4 0h1m-10 1h2m2 0h1m2 0h2m-7 1h5m518 0h1m5 0h1m-528 1h1m521 0h1m3 0h1m-527 1h1m522 0h3m-526 1h1m521 0h1m3 0h1m-531 1h9m516 0h1m5 0h1m-528 1h1m520 0h1m5 0h1m-528 1h1m520 0h1m5 0h1m-528 1h1m521 0h1m3 0h1m-527 1h1m522 0h3m-344 8h1m4 0h3m4 0h1m-13 1h1m3 0h1m3 0h1m3 0h1m-13 1h1m3 0h1m3 0h1m3 0h1m-13 1h1m3 0h1m3 0h1m3 0h1m-13 1h1m4 0h3m4 0h1m-144 1h1m131 0h1m9 0h1m-143 1h1m131 0h1m9 0h1m-143 1h1m10 0h1m121 0h2m5 0h2m-174 1h1m32 0h1m133 0h5m-139 1h1m135 0h1m-137 1h1m10 0h1m124 0h1m-137 1h1m135 0h1m-152 1h1m14 0h1m131 0h9m-141 1h1m10 0h1m124 0h1m-136 1h1m134 0h1m-152 1h1m15 0h1m134 0h1m-136 1h1m10 0h1m123 0h1m-136 1h1m-16 1h1m14 0h1m-1 1h1m10 0h1m-11 1h1m-16 1h1m14 0h1m-1 1h1m9 0h1m-11 1h1m-16 1h1m14 0h1m465 0h1m1 0h1m1 0h1m-470 1h1m9 0h1m455 0h1m1 0h1m1 0h1m1 0h1m-473 1h1m465 0h1m1 0h1m1 0h3m-488 1h1m14 0h1m465 0h1m1 0h1m1 0h1m1 0h1m-473 1h1m9 0h1m455 0h1m1 0h1m1 0h1m1 0h1m-473 1h1m465 0h1m1 0h1m1 0h1m1 0h1m-487 1h1m13 0h1m465 0h1m1 0h1m1 0h1m1 0h1m-472 1h1m9 0h1m102 0h1m351 0h1m1 0h1m2 0h1m-471 1h1m468 0h1m1 0h1m-486 1h1m13 0h1m-1 1h1m9 0h1m-11 1h1m-15 1h1m13 0h1m0 1h1m9 0h1m-11 1h1m-15 1h1m13 0h1m-1 1h1m9 0h1m-11 1h1m-14 1h1m13 0h1m-1 1h1m8 0h1m-10 1h1m-15 1h1m13 0h1m-1 1h1m9 0h1m-11 1h1m-14 1h1m13 0h1m-1 1h1m8 0h1m-10 1h1m-14 1h1m12 0h1m-1 1h1m9 0h1m-11 1h1m-14 1h1m13 0h1m-1 1h1m8 0h1m-10 1h1m-14 1h1m12 0h1m-1 1h1m8 0h1m-9 1h1m-14 1h1m12 0h1m-1 1h1m8 0h1m-10 1h1m-13 1h1m11 0h1m-1 1h1m8 0h1m450 0h1m2 0h1m1 0h2m-466 1h1m457 0h2m2 0h2m2 0h1m-480 1h1m12 0h1m458 0h1m1 0h1m2 0h1m1 0h1m-467 1h1m8 0h1m449 0h1m1 0h1m2 0h2m-466 1h1m458 0h1m1 0h1m4 0h1m-479 1h1m11 0h1m459 0h1m5 0h1m-467 1h1m8 0h1m450 0h1m5 0h1m-466 1h1m458 0h1m5 0h1m-478 1h1m11 0h1m463 0h1m-465 1h1m7 0h1m-9 1h1m-13 1h1m11 0h1m0 1h1m7 0h1m-9 1h1m-13 1h1m11 0h1m-1 1h1m7 0h1m-9 1h1m-12 1h1m10 0h1m0 1h1m7 0h1m-9 1h1m-13 1h1m11 0h1m-1 1h1m7 0h1m-9 1h1m-12 1h1m10 0h1m0 1h1m7 0h1m-9 1h1m-12 1h1m10 0h1m-1 1h1m7 0h1m-9 1h1m-11 1h1m10 0h1m-1 1h1m6 0h1m447 0h3m-458 1h1m453 0h1m3 0h1m-470 1h1m10 0h1m454 0h1m3 0h1m-460 1h1m7 0h1m447 0h1m3 0h1m-461 1h1m455 0h1m3 0h1m-471 1h1m10 0h1m454 0h1m3 0h1m-460 1h1m6 0h1m446 0h1m3 0h1m-459 1h1m452 0h1m3 0h1m-468 1h1m9 0h1m453 0h3m-457 1h1m7 0h1m-9 1h1m-11 1h1m10 0h1m-1 1h1m6 0h1m-8 1h1m-11 1h1m9 0h1m-1 1h1m6 0h1m-7 1h1m-11 1h1m9 0h1m-1 1h1m6 0h1m-8 1h1m-11 1h1m9 0h1m-1 1h1m6 0h1m-7 1h1m-11 1h1m9 0h1m-1 1h1m6 0h1m-8 1h1m-10 1h1m8 0h1m-1 1h1m6 0h1m-7 1h1m-10 1h1m8 0h1m-1 1h1m5 0h1m-7 1h1m-10 1h1m8 0h1m0 1h1m5 0h1m-7 1h1m-10 1h1m8 0h1m-1 1h1m5 0h1m-7 1h1m-9 1h1m7 0h1m0 1h1m5 0h1m-7 1h1m-10 1h1m8 0h1m-1 1h1m5 0h1m-7 1h1m-9 1h1m7 0h1m0 1h1m5 0h1m-7 1h1m-9 1h1m7 0h1m-1 1h1m5 0h1m-7 1h1m-9 1h1m8 0h1m-1 1h1m4 0h1m-6 1h1m-9 1h1m7 0h1m-1 1h1m5 0h1m-7 1h1m-8 1h1m7 0h1m-1 1h1m4 0h1m-6 1h1m-8 1h1m6 0h1m-1 1h1m5 0h1m-6 1h1m-9 1h1m7 0h1m-1 1h1m4 0h1m-6 1h1m-8 1h1m6 0h1m-1 1h1m4 0h1m-5 1h1m-8 1h1m6 0h1m-1 1h1m4 0h1m-6 1h1m441 0h1m2 0h1m2 0h1m-456 1h1m6 0h1m440 0h9m-450 1h1m4 0h1m436 0h1m2 0h1m2 0h1m-448 1h1m441 0h1m1 0h1m1 0h1m-454 1h1m6 0h1m442 0h3m-446 1h1m4 0h1m438 0h1m-445 1h1m441 0h5m-453 1h1m5 0h1m443 0h1m-444 1h1m3 0h1m438 0h1m-444 1h1m-8 1h1m6 0h1m439 0h1m2 0h1m2 0h1m-447 1h1m3 0h1m435 0h1m1 0h1m1 0h1m1 0h1m-447 1h1m439 0h1m2 0h1m2 0h1m-453 1h1m5 0h1m440 0h1m3 0h1m-445 1h1m3 0h1m436 0h3m-444 1h1m441 0h1m-449 1h1m5 0h1m439 0h5m-445 1h1m3 0h1m437 0h1m-443 1h1m441 0h1m-448 1h1m4 0h1m0 1h1m3 0h1m-5 1h1m-7 1h1m5 0h1m-1 1h1m3 0h1m-5 1h1m-6 1h1m5 0h1m-1 1h1m3 0h1m-5 1h1m-6 1h1m4 0h1m-1 1h1m3 0h1m-5 1h1m-6 1h1m5 0h1m-1 1h1m2 0h1m-4 1h1m-6 1h1m4 0h1m-1 1h1m3 0h1m-5 1h1m-5 1h1m4 0h1m-1 1h1m2 0h1m-4 1h1m-6 1h1m4 0h1m-1 1h1m3 0h1m-4 1h1m-6 1h1m4 0h1m-1 1h1m2 0h1m-4 1h1m-5 1h1m3 0h1m-1 1h1m2 0h1m-3 1h1m-5 1h1m3 0h1m120 0h1m-122 1h1m2 0h1m-4 1h1m-5 1h1m3 0h1m-1 1h1m2 0h1m-3 1h1m-5 1h1m3 0h1m142 0h5m-148 1h1m2 0h1m138 0h1m5 0h2m-150 1h1m140 0h1m8 0h1m-154 1h1m2 0h1m141 0h1m8 0h1m-151 1h1m1 0h1m139 0h1m8 0h1m-152 1h1m142 0h1m7 0h1m-156 1h1m3 0h1m142 0h1m8 0h1m-153 1h1m1 0h1m141 0h1m7 0h1m-153 1h1m143 0h1m7 0h1m-156 1h1m2 0h1m143 0h1m7 0h1m-152 1h1m1 0h1m139 0h1m8 0h1m-152 1h1m141 0h1m7 0h1m-154 1h1m2 0h1m140 0h1m8 0h1m-151 1h1m1 0h1m137 0h1m8 0h1m-150 1h1m138 0h1m8 0h1m-152 1h1m2 0h1m139 0h1m5 0h2m-147 1h1m1 0h1m137 0h5m-145 1h1m-4 1h1m2 0h1m-1 1h1m1 0h1m-3 1h1m-3 1h1m2 0h1m-1 1h1m1 0h1m-3 1h1m-3 1h1m1 0h1m220 0h5m-226 1h1m1 0h1m215 0h3m5 0h1m-227 1h1m216 0h1m9 0h3m-232 1h1m2 0h1m214 0h1m9 0h1m3 0h1m-230 1h2m212 0h1m9 0h1m5 0h1m-231 1h1m223 0h1m5 0h1m-233 1h1m1 0h1m215 0h3m5 0h1m5 0h1m-231 1h1m1 0h1m212 0h1m3 0h1m5 0h1m3 0h1m-230 1h1m213 0h1m5 0h1m5 0h3m-230 1h1m1 0h1m212 0h1m5 0h1m-220 1h2m211 0h1m5 0h1m9 0h1m-230 1h1m213 0h1m3 0h1m9 0h1m-231 1h1m1 0h1m214 0h3m9 0h1m-228 1h1m1 0h1m215 0h1m5 0h3m-226 1h1m217 0h5m-225 1h1m1 0h1m-1 1h2m-2 1h1m-2 1h2m-1 1h2m-1 1h1m-3 1h1m1 0h1m-1 1h2m-2 1h1m-2 1h2m-1 1h2m-1 1h1m-2 1h2m-1 1h2m-2 1h1m-1 1h1m0 1h1m-1 1h1m-2 1h2m-1 1h1m-1 1h1m-1 1h1m0 1h1m-1 1h1m-1 1h1m-1 1h1m-1 1h1m-1 1h1m0 1h1m-1 1h1m-1 1h1m-245 8h1m15 0h1m-16 1h1m13 0h1m-14 1h1m11 0h1m-12 1h1m9 0h1m-11 1h1m9 0h1m-10 1h1m7 0h1m-9 1h1m7 0h1m-9 1h1m7 0h1m-13 1h17m-13 1h1m7 0h1m-9 1h1m7 0h1m-9 1h1m7 0h1m-10 1h1m9 0h1m-11 1h1m9 0h1m-12 1h1m11 0h1m-14 1h1m13 0h1m-16 1h1m15 0h1"/>
<path stroke="#00ff00" d="M400 54.5h5m-6 1h1m5 0h1m-8 1h1m7 0h1m-9 1h1m7 0h1m-9 1h1m7 0h1m-8 1h1m5 0h1m-12 1h7m3 0h7m-17 4h17m-115 47h5m-6 1h1m5 0h1m-8 1h1m7 0h1m-9 1h1m7 0h1m-9 1h1m7 0h1m-9 1h1m7 0h1m-9 1h1m7 0h1m-8 1h1m5 0h1m-6 1h5m-3 1h1m-1 1h1m-1 1h1m-5 1h9m-5 1h1m-1 1h1m446 1h2m3 0h2m-8 1h1m2 0h1m1 0h1m2 0h1m-9 1h1m2 0h1m1 0h1m2 0h1m-8 1h1m2 0h1m2 0h1m-379 1h1m11 0h1m362 0h1m-375 1h1m9 0h1m363 0h1m-374 1h1m7 0h1m364 0h1m-374 1h1m7 0h1m364 0h1m-374 1h1m3 0h1m3 0h1m364 0h1m-374 1h1m3 0h1m3 0h1m-180 1h1m7 0h1m162 0h9m-179 1h1m5 0h1m163 0h1m3 0h1m3 0h1m-178 1h5m164 0h1m3 0h1m3 0h1m-179 1h1m5 0h1m162 0h1m4 0h1m4 0h1m-181 1h1m7 0h1m160 0h1m5 0h1m5 0h1m-182 1h1m7 0h1m166 0h1m-176 1h1m7 0h1m165 0h3m-177 1h1m7 0h1m164 0h1m3 0h1m-178 1h1m7 0h1m164 0h1m3 0h1m-177 1h1m5 0h1m165 0h1m3 0h1m-176 1h5m167 0h3m-173 1h1m-1 1h1m-1 1h1m-5 1h9m72 0h1m-78 1h1m-1 1h1m77 4h1m0 1h1m-1 1h1m-12 1h1m11 0h1m0 1h1m-1 1h1m0 1h1m-12 1h1m11 0h1m-1 1h1m0 1h1m72 0h1m-73 1h1m453 0h3m-521 1h1m52 0h1m11 0h1m451 0h1m3 0h1m-457 1h1m450 0h1m5 0h1m-457 1h1m449 0h1m5 0h1m-456 1h1m448 0h1m5 0h1m-467 1h1m10 0h1m64 0h1m384 0h1m3 0h1m-454 1h1m61 0h1m384 0h1m1 0h1m3 0h1m-453 1h1m446 0h1m5 0h1m-454 1h1m58 0h1m394 0h1m-465 1h1m10 0h1m55 0h1m-56 1h1m52 0h1m-54 1h1m50 0h1m-51 1h1m-11 1h1m10 0h1m46 0h1m-48 1h1m44 0h1m-45 1h1m0 1h1m38 0h1m-50 1h1m10 0h1m-1 1h1m35 0h1m-36 1h1m32 0h1m-33 1h1m29 0h1m-41 1h1m9 0h1m27 0h1m-28 1h1m0 1h1m23 0h1m-25 1h1m21 0h1m-32 1h1m9 0h1m18 0h1m-19 1h1m15 0h1m-17 1h1m0 1h1m12 0h1m-23 1h1m9 0h1m9 0h1m-11 1h1m7 0h1m-8 1h1m4 0h1m-5 1h1m-10 1h1m8 0h1m1 0h1m-3 1h2m-4 1h1m3 0h1m-7 1h1m6 0h1m-10 1h1m8 0h1m0 1h1m-13 1h1m12 0h1m-16 1h1m14 0h1m429 0h3m-450 1h1m8 0h1m8 0h1m429 0h2m-452 1h1m20 0h1m427 0h1m1 0h1m-431 1h1m422 0h1m3 0h1m-451 1h1m23 0h1m422 0h1m1 0h1m-452 1h1m17 0h1m8 0h1m422 0h1m-453 1h1m28 0h1m421 0h1m1 0h1m-456 1h1m31 0h1m419 0h1m3 0h1m-424 1h1m417 0h1m-454 1h1m26 0h1m7 0h1m-38 1h1m37 0h1m-41 1h1m40 0h1m-44 1h1m43 0h1m-9 1h1m7 0h1m-47 1h1m46 0h1m-50 1h1m49 0h1m-53 1h1m51 0h1m-55 1h1m46 0h1m7 0h1m0 1h1m-59 1h1m57 0h1m-61 1h1m60 0h1m-64 1h1m55 0h1m7 0h1m-67 1h1m65 0h1m0 1h1m-70 1h1m69 0h1m-73 1h1m64 0h1m6 0h1m-75 1h1m74 0h1m-78 1h1m77 0h1m-81 1h1m80 0h1m-8 1h1m6 0h1m-84 1h1m83 0h1m-87 1h1m86 0h1m-90 1h1m88 0h1m-92 1h1m84 0h1m6 0h1m0 1h1m-96 1h1m94 0h1m-98 1h1m97 0h1m-101 1h1m93 0h1m6 0h1m-104 1h1m102 0h1m0 1h1m-107 1h1m106 0h1m-110 1h1m102 0h1m5 0h1m-112 1h1m111 0h1m-115 1h1m114 0h1m-1 1h1m-118 1h1m111 0h1m5 0h1m-121 1h1m120 0h1m-124 1h1m123 0h1m-127 1h1m125 0h1m-6 1h1m5 0h1m-130 1h1m129 0h1m390 0h1m3 0h1m-528 1h1m131 0h1m391 0h3m-529 1h1m134 0h1m389 0h1m3 0h1m-532 1h1m131 0h1m5 0h1m388 0h1m3 0h1m-394 1h1m388 0h1m3 0h1m-534 1h1m140 0h1m388 0h3m-535 1h1m143 0h1m388 0h1m-536 1h1m140 0h1m4 0h1m386 0h5m-540 1h1m148 0h1m387 0h1m-388 1h1m-153 1h1m151 0h1m385 0h3m-543 1h1m149 0h1m4 0h1m383 0h1m3 0h1m-546 1h1m157 0h1m382 0h1m3 0h1m-548 1h1m160 0h1m381 0h1m3 0h1m-550 1h1m162 0h1m382 0h3m-390 1h1m4 0h1m382 0h1m-550 1h1m166 0h1m379 0h5m-554 1h1m168 0h1m381 0h1m-554 1h1m171 0h1m380 0h1m-556 1h1m169 0h1m4 0h1m-1 1h1m-178 1h1m177 0h1m-181 1h1m180 0h1m-184 1h1m178 0h1m3 0h1m-186 1h1m185 0h1m0 1h1m-190 1h1m188 0h1m-192 1h1m187 0h1m3 0h1m-195 1h1m194 0h1m-198 1h1m196 0h1m0 1h1m-201 1h1m196 0h1m3 0h1m-204 1h1m203 0h1m-207 1h1m205 0h1m-209 1h1m208 0h1m-4 1h1m3 0h1m-213 1h1m211 0h1m-215 1h1m214 0h1m-218 1h1m217 0h1m-221 1h1m215 0h1m3 0h1m0 1h1m-224 1h1m223 0h1m-227 1h1m225 0h1m-229 1h1m224 0h1m3 0h1m0 1h1m-1 1h1m0 1h1m-4 1h1m3 0h1m0 1h1m-1 1h1m0 1h1m355 0h1m5 0h1m-366 1h1m3 0h1m355 0h1m3 0h1m-361 1h1m355 0h1m1 0h1m1 0h1m-360 1h1m354 0h5m-359 1h1m353 0h1m1 0h1m1 0h1m-362 1h1m2 0h1m352 0h1m2 0h1m2 0h1m-359 1h1m354 0h1m-355 1h1m352 0h1m1 0h1m-356 1h1m353 0h1m-357 1h1m2 0h1m0 1h1m-1 1h1m0 1h1m-3 1h1m2 0h1m0 1h1m-366 1h1m5 0h1m5 0h1m352 0h1m-367 1h2m4 0h2m4 0h1m354 0h1m-368 1h1m1 0h1m3 0h1m1 0h1m3 0h1m352 0h1m2 0h1m-370 1h1m2 0h1m2 0h1m2 0h1m2 0h1m356 0h1m-371 1h1m3 0h1m1 0h1m3 0h1m1 0h1m358 0h1m-372 1h1m4 0h2m4 0h2m359 0h1m-374 1h1m5 0h1m5 0h1m358 0h1m1 0h1m0 1h1m0 1h1m-1 1h1m-372 1h1m5 0h1m5 0h1m357 0h1m1 0h1m-374 1h2m4 0h2m4 0h1m361 0h1m-375 1h1m1 0h1m3 0h1m1 0h1m3 0h1m361 0h1m-376 1h1m2 0h1m2 0h1m2 0h1m2 0h1m363 0h1m-378 1h1m3 0h1m1 0h1m3 0h1m1 0h1m363 0h1m1 0h1m-379 1h1m4 0h2m4 0h2m365 0h1m-380 1h1m5 0h1m5 0h1m367 0h1m0 1h1m-2 1h1m1 0h1m-1 1h1m0 1h1m0 1h1m-2 1h2m0 1h1m0 1h1m-1 1h1m-1 1h2m0 1h1m-1 1h1m0 1h1m-1 1h2m-1 1h1m0 1h1m0 1h1m-1 1h2m-1 1h1m0 1h1m0 1h1m-1 1h1m0 1h1m0 1h1m-1 1h1m0 1h1m21 138h1m13 0h1m-14 1h1m11 0h1m-12 1h11m-9 1h1m5 0h1m-7 1h1m5 0h1m-7 1h1m5 0h1m-7 1h1m5 0h1m-7 1h1m5 0h1m-7 1h1m5 0h1m-7 1h1m5 0h1m-7 1h1m5 0h1m-7 1h1m5 0h1m-7 1h1m5 0h1m-7 1h1m5 0h1m-9 1h11m-12 1h1m11 0h1m-14 1h1m13 0h1"/>
<path stroke="#808080" d="M296 61.5h1m3 0h1m3 0h1m-25 1h1m3 0h1m3 0h1m7 0h1m3 0h1m3 0h1m3 0h1m7 0h1m3 0h1m-45 1h1m3 0h1m3 0h1m3 0h1m7 0h1m3 0h1m3 0h1m3 0h1m7 0h1m3 0h1m3 0h1m4 0h1m-67 1h1m3 0h1m8 0h1m3 0h1m3 0h1m3 0h1m7 0h1m3 0h1m3 0h1m3 0h1m7 0h1m3 0h1m3 0h1m4 0h1m-71 1h1m3 0h1m3 0h1m8 0h1m3 0h1m3 0h1m3 0h1m7 0h1m3 0h1m3 0h1m3 0h1m7 0h1m3 0h1m3 0h1m4 0h1m7 0h1m3 0h1m-87 1h1m3 0h1m3 0h1m3 0h1m8 0h1m3 0h1m3 0h1m3 0h1m7 0h1m3 0h1m3 0h1m3 0h1m7 0h1m3 0h1m3 0h1m4 0h1m7 0h1m3 0h1m3 0h1m-99 1h1m7 0h1m3 0h1m3 0h1m4 0h1m7 0h1m3 0h1m3 0h1m3 0h1m7 0h1m3 0h1m3 0h1m3 0h1m7 0h1m3 0h1m3 0h1m3 0h1m8 0h1m3 0h1m3 0h1m3 0h1m-107 1h1m3 0h1m8 0h1m3 0h1m3 0h1m3 0h1m7 0h1m3 0h1m3 0h1m4 0h1m7 0h1m2 0h1m2 0h1m3 0h1m8 0h1m3 0h1m3 0h1m3 0h1m7 0h1m4 0h1m3 0h1m3 0h1m-111 1h1m3 0h1m3 0h1m8 0h1m3 0h1m3 0h1m3 0h1m8 0h1m3 0h1m3 0h1m3 0h1m7 0h1m2 0h1m2 0h1m3 0h1m7 0h1m3 0h1m4 0h1m3 0h1m7 0h1m3 0h1m4 0h1m2 0h1m8 0h1m-123 1h1m3 0h1m3 0h1m4 0h1m7 0h1m3 0h1m3 0h1m3 0h1m8 0h1m3 0h1m3 0h1m3 0h1m7 0h1m2 0h1m2 0h1m3 0h1m7 0h1m3 0h1m3 0h1m4 0h1m7 0h1m3 0h1m3 0h1m3 0h1m8 0h1m3 0h1m-127 1h1m3 0h1m4 0h1m3 0h1m7 0h1m3 0h1m3 0h1m3 0h1m8 0h1m3 0h1m3 0h1m3 0h1m7 0h1m2 0h1m2 0h1m3 0h1m7 0h1m3 0h1m3 0h1m4 0h1m7 0h1m3 0h1m3 0h1m3 0h1m7 0h1m4 0h1m3 0h1m-131 1h1m4 0h1m3 0h1m3 0h1m8 0h1m2 0h1m3 0h1m3 0h1m8 0h1m3 0h1m3 0h1m3 0h1m7 0h1m2 0h1m2 0h1m3 0h1m7 0h1m3 0h1m3 0h1m4 0h1m7 0h1m3 0h1m3 0h1m3 0h1m7 0h1m3 0h1m4 0h1m3 0h1m-143 1h1m8 0h1m3 0h1m3 0h1m3 0h1m8 0h1m2 0h1m3 0h1m4 0h1m7 0h1m3 0h1m3 0h1m3 0h1m7 0h1m2 0h1m2 0h1m3 0h1m7 0h1m3 0h1m3 0h1m3 0h1m8 0h1m3 0h1m3 0h1m2 0h1m8 0h1m3 0h1m3 0h1m4 0h1m-147 1h1m3 0h1m8 0h1m3 0h1m3 0h1m4 0h1m7 0h1m3 0h1m3 0h1m3 0h1m7 0h1m3 0h1m3 0h1m3 0h1m7 0h1m2 0h1m2 0h1m3 0h1m7 0h1m3 0h1m3 0h1m3 0h1m7 0h1m4 0h1m3 0h1m2 0h1m8 0h1m3 0h1m3 0h1m3 0h1m-150 1h1m3 0h1m4 0h1m7 0h1m3 0h1m4 0h1m3 0h1m7 0h1m3 0h1m3 0h1m3 0h1m7 0h1m3 0h1m3 0h1m29 0h1m3 0h1m3 0h1m3 0h1m7 0h1m3 0h1m4 0h1m2 0h1m7 0h1m4 0h1m3 0h1m3 0h1m8 0h1m-159 1h1m4 0h1m3 0h1m7 0h1m4 0h1m3 0h1m3 0h1m8 0h1m2 0h1m3 0h1m3 0h1m57 0h1m7 0h1m3 0h1m3 0h1m3 0h1m7 0h1m3 0h1m4 0h1m3 0h1m8 0h1m3 0h1m-167 1h1m4 0h1m3 0h1m3 0h1m8 0h1m3 0h1m3 0h1m3 0h1m8 0h1m2 0h1m73 0h1m3 0h1m3 0h1m2 0h1m8 0h1m3 0h1m3 0h1m3 0h1m8 0h1m4 0h1m-167 1h1m4 0h1m3 0h1m4 0h1m7 0h1m3 0h1m3 0h1m4 0h1m7 0h1m80 0h1m3 0h1m2 0h1m8 0h1m3 0h1m3 0h1m3 0h1m8 0h1m3 0h1m4 0h1m-170 1h1m3 0h1m4 0h1m3 0h1m7 0h1m3 0h1m4 0h1m3 0h1m92 0h1m2 0h1m7 0h1m4 0h1m3 0h1m3 0h1m8 0h1m3 0h1m4 0h1m3 0h1m-183 1h1m8 0h1m4 0h1m3 0h1m3 0h1m7 0h1m4 0h1m3 0h1m3 0h1m103 0h1m3 0h1m4 0h1m2 0h1m8 0h1m4 0h1m3 0h1m4 0h1m-183 1h1m9 0h1m3 0h1m3 0h1m4 0h1m7 0h1m3 0h1m3 0h1m107 0h1m3 0h1m3 0h1m3 0h1m8 0h1m3 0h1m4 0h1m3 0h1m-185 1h1m3 0h1m8 0h1m3 0h1m4 0h1m3 0h1m7 0h1m3 0h1m115 0h1m3 0h1m3 0h1m8 0h1m3 0h1m3 0h1m4 0h1m7 0h1m-197 1h1m3 0h1m3 0h1m9 0h1m3 0h1m3 0h1m3 0h1m7 0h1m123 0h1m2 0h1m8 0h1m4 0h1m3 0h1m3 0h1m8 0h1m-197 1h1m4 0h1m3 0h1m8 0h1m3 0h1m3 0h1m4 0h1m133 0h1m8 0h1m3 0h1m3 0h1m4 0h1m7 0h1m4 0h1m-205 1h1m4 0h1m3 0h1m3 0h1m8 0h1m3 0h1m4 0h1m3 0h1m142 0h1m3 0h1m3 0h1m3 0h1m8 0h1m4 0h1m-204 1h1m3 0h1m4 0h1m3 0h1m8 0h1m3 0h1m3 0h1m145 0h1m4 0h1m3 0h1m3 0h1m7 0h1m4 0h1m4 0h1m-208 1h1m4 0h1m3 0h1m3 0h1m8 0h1m3 0h1m149 0h1m3 0h1m3 0h1m4 0h1m7 0h1m4 0h1m3 0h1m-206 1h1m3 0h1m4 0h1m2 0h1m9 0h1m156 0h1m3 0h1m3 0h1m7 0h1m4 0h1m4 0h1m4 0h1m-220 1h1m8 0h1m4 0h1m3 0h1m3 0h1m8 0h1m159 0h1m4 0h1m7 0h1m4 0h1m3 0h1m4 0h1m-218 1h1m8 0h1m3 0h1m4 0h1m2 0h1m172 0h1m8 0h1m3 0h1m4 0h1m4 0h1m-223 1h1m4 0h1m8 0h1m3 0h1m4 0h1m3 0h1m179 0h1m4 0h1m3 0h1m4 0h1m-221 1h1m4 0h1m8 0h1m3 0h1m4 0h1m182 0h1m4 0h1m3 0h1m4 0h1m8 0h1m-235 1h1m4 0h1m4 0h1m8 0h1m3 0h1m4 0h1m181 0h1m4 0h1m3 0h1m4 0h1m8 0h1m-233 1h1m4 0h1m4 0h1m8 0h1m3 0h1m185 0h1m4 0h1m3 0h1m4 0h1m8 0h1m3 0h1m-241 1h1m3 0h1m4 0h1m4 0h1m8 0h1m3 0h1m189 0h1m3 0h1m4 0h1m8 0h1m3 0h1m-239 1h1m3 0h1m4 0h1m4 0h1m8 0h1m192 0h1m3 0h1m4 0h1m8 0h1m3 0h1m4 0h1m-244 1h1m4 0h1m3 0h1m4 0h1m204 0h1m4 0h1m8 0h1m3 0h1m4 0h1m-242 1h1m3 0h1m4 0h1m4 0h1m208 0h1m8 0h1m3 0h1m4 0h1m4 0h1m-256 1h1m8 0h1m4 0h1m3 0h1m4 0h1m207 0h1m8 0h1m3 0h1m4 0h1m4 0h1m-254 1h1m8 0h1m3 0h1m4 0h1m4 0h1m215 0h1m3 0h1m3 0h1m5 0h1m-254 1h1m8 0h1m4 0h1m3 0h1m219 0h1m3 0h1m4 0h1m4 0h1m-258 1h1m5 0h1m8 0h1m4 0h1m3 0h1m218 0h1m3 0h1m3 0h1m4 0h1m-256 1h1m5 0h1m7 0h1m4 0h1m221 0h1m3 0h1m4 0h1m4 0h1m9 0h1m-270 1h1m3 0h1m5 0h1m8 0h1m229 0h1m3 0h1m4 0h1m9 0h1m-268 1h1m3 0h1m5 0h1m7 0h1m228 0h1m3 0h1m5 0h1m8 0h1m4 0h1m-277 1h1m4 0h1m4 0h1m4 0h1m8 0h1m231 0h1m4 0h1m9 0h1m3 0h1m-275 1h1m4 0h1m4 0h1m4 0h1m238 0h1m4 0h1m9 0h1m4 0h1m-275 1h1m5 0h1m3 0h1m5 0h1m242 0h1m8 0h1m4 0h1m4 0h1m-278 1h1m5 0h1m3 0h1m4 0h1m241 0h1m8 0h1m4 0h1m4 0h1m-276 1h1m4 0h1m4 0h1m4 0h1m248 0h1m5 0h1m4 0h1m4 0h1m-290 1h1m9 0h1m4 0h1m3 0h1m253 0h1m4 0h1m4 0h1m4 0h1m-288 1h1m8 0h1m5 0h1m3 0h1m251 0h1m5 0h1m3 0h1m4 0h1m-286 1h1m8 0h1m4 0h1m254 0h1m5 0h1m3 0h1m5 0h1m-291 1h1m4 0h1m9 0h1m4 0h1m258 0h1m4 0h1m4 0h1m-289 1h1m4 0h1m9 0h1m187 0h1m74 0h1m3 0h1m4 0h1m9 0h1m-303 1h1m5 0h1m4 0h1m8 0h1m261 0h1m3 0h1m4 0h1m9 0h1m-301 1h1m4 0h1m5 0h1m8 0h1m185 0h1m78 0h1m3 0h1m9 0h1m-299 1h1m4 0h1m5 0h1m271 0h1m4 0h1m9 0h1m4 0h1m-309 1h1m4 0h1m5 0h1m4 0h1m192 0h1m82 0h1m9 0h1m4 0h1m-307 1h1m4 0h1m5 0h1m4 0h1m273 0h1m9 0h1m4 0h1m-305 1h1m4 0h1m5 0h1m4 0h1m190 0h1m90 0h1m5 0h1m5 0h1m-311 1h1m5 0h1m4 0h1m285 0h1m5 0h1m5 0h1m-309 1h1m5 0h1m4 0h1m193 0h1m90 0h1m4 0h1m5 0h1m4 0h1m-312 1h1m4 0h1m5 0h1m282 0h1m4 0h1m5 0h1m4 0h1m-321 1h1m10 0h1m4 0h1m197 0h1m88 0h1m4 0h1m5 0h1m4 0h1m-319 1h1m10 0h1m4 0h1m290 0h1m4 0h1m4 0h1m-322 1h1m4 0h1m9 0h1m200 0h1m93 0h1m4 0h1m4 0h1m-320 1h1m4 0h1m9 0h1m292 0h1m4 0h1m4 0h1m-318 1h1m4 0h1m9 0h1m197 0h1m97 0h1m5 0h1m10 0h1m-334 1h1m5 0h1m4 0h1m303 0h1m5 0h1m10 0h1m-332 1h1m5 0h1m4 0h1m153 0h1m51 0h1m101 0h1m10 0h1m-330 1h1m5 0h1m4 0h1m151 0h1m153 0h1m10 0h1m5 0h1m-340 1h1m5 0h1m4 0h1m5 0h1m149 0h1m52 0h1m100 0h1m10 0h1m5 0h1m-338 1h1m5 0h1m4 0h1m5 0h1m147 0h1m164 0h1m5 0h1m-336 1h1m5 0h1m4 0h1m151 0h1m54 0h1m109 0h1m5 0h1m5 0h1m-340 1h1m5 0h1m4 0h1m149 0h1m164 0h1m5 0h1m5 0h1m-338 1h1m5 0h1m4 0h1m147 0h1m55 0h1m108 0h1m5 0h1m5 0h1m-336 1h1m5 0h1m150 0h1m164 0h1m5 0h1m5 0h1m4 0h1m-351 1h1m11 0h1m5 0h1m148 0h1m56 0h1m113 0h1m4 0h2m4 0h1m-349 1h1m11 0h1m152 0h1m170 0h1m4 0h1m5 0h1m-347 1h1m11 0h1m150 0h1m58 0h1m111 0h1m4 0h1m5 0h1m-350 1h1m4 0h1m11 0h1m148 0h1m175 0h1m5 0h1m-348 1h1m4 0h1m158 0h1m59 0h1m115 0h1m5 0h1m-346 1h1m4 0h2m155 0h1m175 0h1m5 0h1m11 0h1m-356 1h1m5 0h1m215 0h1m119 0h1m11 0h1m-361 1h1m6 0h1m5 0h1m333 0h1m10 0h2m-359 1h1m6 0h1m5 0h1m47 0h1m164 0h1m118 0h1m10 0h1m6 0h1m-363 1h2m5 0h1m5 0h1m340 0h1m6 0h1m-367 1h1m6 0h1m5 0h1m53 0h1m161 0h1m128 0h1m5 0h2m-365 1h1m6 0h1m5 0h1m341 0h2m5 0h1m-362 1h2m5 0h1m5 0h1m52 0h1m160 0h1m125 0h1m6 0h1m6 0h1m-366 1h1m5 0h2m342 0h1m6 0h1m6 0h1m-364 1h1m6 0h1m57 0h1m157 0h1m130 0h2m5 0h2m-362 1h1m6 0h1m344 0h1m6 0h1m6 0h1m-378 1h1m11 0h2m62 0h1m156 0h1m128 0h1m6 0h1m6 0h1m-376 1h1m12 0h1m353 0h1m5 0h2m-374 1h2m11 0h1m62 0h1m153 0h1m133 0h2m5 0h1m-370 1h1m360 0h1m6 0h1m-375 1h1m6 0h1m73 0h1m151 0h1m132 0h1m6 0h1m-373 1h2m5 0h1m362 0h2m11 0h1m-382 1h1m5 0h2m72 0h1m149 0h1m136 0h1m11 0h2m-387 1h1m6 0h1m6 0h1m357 0h1m11 0h1m-384 1h2m5 0h2m5 0h1m72 0h1m146 0h1m147 0h1m-381 1h1m6 0h1m370 0h2m6 0h1m-392 1h1m5 0h2m5 0h2m76 0h1m145 0h1m144 0h1m6 0h2m-390 1h1m6 0h2m5 0h1m365 0h1m6 0h1m-387 1h2m6 0h1m82 0h1m142 0h1m142 0h2m5 0h2m5 0h1m-390 1h1m6 0h2m365 0h1m6 0h1m5 0h2m-388 1h1m7 0h1m80 0h1m140 0h1m148 0h1m5 0h1m-385 1h1m375 0h2m4 0h2m-383 1h2m87 0h1m138 0h1m145 0h1m5 0h1m8 0h1m-402 1h1m13 0h1m376 0h1m7 0h2m-400 1h2m12 0h1m86 0h1m136 0h1m149 0h2m7 0h1m-396 1h1m384 0h1m7 0h2m-394 1h2m98 0h1m134 0h1m154 0h2m-398 1h1m7 0h2m385 0h1m-395 1h2m7 0h1m96 0h1m132 0h1m152 0h2m-392 1h1m7 0h2m379 0h1m14 0h1m-404 1h2m7 0h1m95 0h1m129 0h1m165 0h2m-409 1h1m7 0h2m395 0h2m-406 1h2m7 0h1m102 0h1m127 0h1m161 0h2m6 0h1m-409 1h2m6 0h2m344 0h1m43 0h2m6 0h2m-413 1h1m6 0h2m6 0h1m100 0h1m125 0h1m114 0h1m43 0h2m7 0h1m-410 1h2m6 0h2m389 0h1m7 0h2m-407 1h2m6 0h2m105 0h1m123 0h1m112 0h1m50 0h2m7 0h1m-411 1h2m6 0h1m339 0h1m51 0h1m7 0h2m-408 1h2m110 0h1m121 0h1m161 0h2m6 0h2m-404 1h2m340 0h1m57 0h2m-400 1h1m109 0h1m118 0h1m108 0h1m57 0h2m8 0h1m-422 1h1m408 0h2m8 0h2m-420 1h2m123 0h1m117 0h1m106 0h1m56 0h1m8 0h2m-416 1h2m410 0h2m-412 1h2m121 0h1m114 0h1m105 0h1m63 0h2m-417 1h1m8 0h2m338 0h1m63 0h2m-414 1h2m8 0h2m119 0h1m111 0h1m167 0h1m-410 1h2m8 0h1m333 0h1m78 0h2m-423 1h2m126 0h1m110 0h1m100 0h1m78 0h2m-428 1h2m7 0h2m413 0h2m-424 1h2m7 0h2m124 0h1m107 0h1m99 0h1m76 0h2m-420 1h2m7 0h1m329 0h1m76 0h2m8 0h2m-426 1h3m129 0h1m106 0h1m172 0h2m8 0h2m-432 1h2m9 0h2m330 0h1m83 0h3m-428 1h2m9 0h2m127 0h1m103 0h1m94 0h1m83 0h2m-423 1h2m417 0h2m8 0h2m-429 1h3m134 0h1m101 0h1m93 0h1m81 0h2m8 0h2m-424 1h2m326 0h1m91 0h2m-420 1h2m132 0h1m99 0h1m181 0h2m6 0h2m-102 1h1m89 0h2m6 0h2m-438 1h2m148 0h1m96 0h1m178 0h2m5 0h3m-434 1h2m332 0h1m94 0h2m-429 1h2m44 0h1m100 0h1m95 0h1m86 0h1m94 0h2m-425 1h3m43 0h1m375 0h1m-430 1h2m8 0h2m43 0h1m98 0h1m178 0h1m-332 1h2m8 0h1m44 0h1m273 0h1m-328 1h2m53 0h1m95 0h1m90 0h1m195 0h2m-438 1h3m52 0h1m267 0h1m110 0h2m-444 1h2m9 0h2m52 0h1m93 0h1m88 0h1m80 0h1m109 0h3m-440 1h3m8 0h1m53 0h1m369 0h2m-434 1h3m61 0h1m90 0h1m86 0h1m79 0h1m107 0h2m9 0h2m-440 1h3m60 0h1m253 0h1m107 0h2m8 0h3m-447 1h2m10 0h2m60 0h1m88 0h1m84 0h1m192 0h3m-442 1h3m71 0h1m247 0h1m113 0h3m-436 1h3m70 0h1m86 0h1m81 0h1m74 0h1m113 0h2m10 0h2m-442 1h3m69 0h1m364 0h3m-437 1h2m69 0h1m83 0h1m79 0h1m73 0h1m121 0h3m-361 1h1m354 0h3m-356 1h1m81 0h1m77 0h1m71 0h1m118 0h2m10 0h2m-363 1h1m227 0h1m129 0h3m-452 1h2m91 0h1m78 0h1m75 0h1m197 0h3m-447 1h3m90 0h1m221 0h1m125 0h3m-441 1h3m89 0h1m76 0h1m73 0h1m66 0h1m125 0h2m-435 1h3m88 0h1m-101 1h2m10 0h2m88 0h1m73 0h1m71 0h1m65 0h1m-313 1h4m98 0h1m207 0h1m-307 1h4m168 0h1m68 0h1m207 0h3m-448 1h3m93 0h1m203 0h1m140 0h4m-456 1h2m107 0h1m70 0h1m67 0h1m60 0h1m138 0h4m-450 1h4m105 0h1m333 0h3m-442 1h4m103 0h1m68 0h1m64 0h1m59 0h1m149 0h3m-450 1h3m102 0h1m189 0h1m147 0h4m-458 1h2m116 0h1m66 0h1m62 0h1m201 0h4m-452 1h4m114 0h1m183 0h1m142 0h3m-444 1h4m112 0h1m63 0h1m60 0h1m54 0h1m156 0h3m-452 1h3m111 0h1m330 0h4m-333 1h1m61 0h1m57 0h1m53 0h1m150 0h4m-327 1h1m319 0h3m-321 1h1m58 0h1m56 0h1m51 0h1m161 0h3m-331 1h1m163 0h1m159 0h4m-462 1h2m134 0h1m56 0h1m53 0h1m206 0h4m-456 1h4m132 0h1m157 0h1m154 0h3m-448 1h4m130 0h1m53 0h1m52 0h1m46 0h1m-285 1h3m129 0h1m-144 1h4m141 0h1m51 0h1m49 0h1m45 0h1m-290 1h6m137 0h1m143 0h1m-282 1h3m136 0h1m49 0h1m46 0h1m217 0h3m-316 1h1m308 0h4m-465 1h4m150 0h1m46 0h1m45 0h1m40 0h1m168 0h4m-457 1h6m445 0h2m-447 1h3m145 0h1m44 0h1m42 0h1m218 0h4m-309 1h1m123 0h1m174 0h6m-465 1h3m201 0h1m41 0h1m209 0h3m-456 1h6m153 0h1m119 0h1m-274 1h4m151 0h1m41 0h1m38 0h1m220 0h4m-304 1h1m113 0h1m179 0h6m-298 1h1m38 0h1m36 0h1m33 0h1m178 0h3m-290 1h1m1 1h1m36 0h1m34 0h1m31 0h1m189 0h4m-296 1h1m99 0h1m185 0h6m-468 1h4m174 0h1m34 0h1m31 0h1m213 0h3m-458 1h6m170 0h1m93 0h1m-265 1h4m168 0h1m31 0h1m29 0h1m27 0h1m-89 1h1m1 1h1m29 0h1m27 0h1m25 0h1m-271 1h7m181 0h1m79 0h1m-262 1h6m177 0h1m26 0h1m25 0h1m-52 1h1m73 0h1m199 0h7m-279 1h1m24 0h1m23 0h1m20 0h1m195 0h6m-467 1h7m190 0h1m-191 1h7m185 0h1m21 0h1m21 0h1m19 0h1m-63 1h1m59 0h1m206 0h7m-272 1h1m19 0h1m18 0h1m218 0h7m-468 1h7m198 0h1m53 0h1m-253 1h7m193 0h1m16 0h1m17 0h1m-34 1h1m47 0h1m210 0h7m-264 1h1m14 0h1m14 0h1m13 0h1m205 0h7m-255 2h1m14 0h1m12 0h1m11 0h1m-39 1h1m35 0h1m216 0h7m-258 1h1m11 0h1m10 0h1m221 0h6m-468 1h6m213 0h1m29 0h1m-244 1h7m208 0h1m9 0h1m7 0h1m7 0h1m-25 1h1m1 1h1m6 0h1m6 0h1m5 0h1m-247 1h7m221 0h1m-222 1h7m216 0h1m4 0h1m3 0h1m-8 1h1m9 0h1m227 0h7m-243 1h1m1 0h1m3 0h1m222 0h7m-470 1h14m222 0h1m1 1h1m1 1h1m222 0h14m-470 1h7m222 0h2m2 0h1m1 0h1m-243 1h7m227 0h1m9 0h1m-8 1h1m3 0h1m4 0h1m216 0h7m-238 1h1m15 0h1m221 0h7m-247 1h1m5 0h1m6 0h1m6 0h1m1 1h1m-25 1h1m7 0h1m7 0h1m9 0h1m208 0h6m-243 1h1m29 0h1m212 0h7m-469 1h7m221 0h1m22 0h1m-258 1h6m217 0h1m35 0h1m-39 1h1m24 0h1m14 0h1m-255 2h7m205 0h1m13 0h1m14 0h1m14 0h1m-264 1h7m210 0h1m47 0h1m-34 1h1m17 0h1m16 0h1m193 0h7m-253 1h1m53 0h1m198 0h7m-468 1h7m218 0h1m18 0h1m19 0h1m-272 1h7m206 0h1m59 0h1m-63 1h1m19 0h1m21 0h1m21 0h1m185 0h7m-191 1h1m190 0h7m-468 1h7m195 0h1m20 0h1m23 0h1m24 0h1m-279 1h6m200 0h1m73 0h1m-52 1h1m25 0h1m26 0h1m177 0h6m-262 1h1m79 0h1m181 0h7m-271 1h1m25 0h1m27 0h1m29 0h1m1 1h1m-89 1h1m27 0h1m29 0h1m31 0h1m168 0h4m-265 1h1m93 0h1m170 0h6m-459 1h4m213 0h1m31 0h1m34 0h1m174 0h4m-469 1h6m186 0h1m99 0h1m-296 1h3m190 0h1m31 0h1m34 0h1m36 0h1m1 1h1m-290 1h3m178 0h1m33 0h1m36 0h1m38 0h1m-298 1h6m179 0h1m113 0h1m-304 1h4m220 0h1m38 0h1m41 0h1m151 0h3m-273 1h1m119 0h1m152 0h6m-456 1h4m209 0h1m41 0h1m200 0h4m-466 1h6m175 0h1m123 0h1m-309 1h3m179 0h1m39 0h1m42 0h1m44 0h1m144 0h4m-448 1h3m298 0h1m146 0h6m-458 1h4m169 0h1m40 0h1m45 0h1m46 0h1m150 0h4m-466 1h4m171 0h1m137 0h1m-316 1h2m218 0h1m46 0h1m49 0h1m135 0h4m-282 1h1m143 0h1m137 0h6m-290 1h1m45 0h1m49 0h1m51 0h1m141 0h4m-144 1h1m129 0h2m-284 1h1m46 0h1m52 0h1m53 0h1m129 0h4m-447 1h3m154 0h1m157 0h1m131 0h4m-455 1h4m206 0h1m53 0h1m56 0h1m133 0h3m-462 1h4m159 0h1m163 0h1m-331 1h3m161 0h1m51 0h1m56 0h1m58 0h1m-321 1h3m70 0h2m247 0h1m-327 1h4m70 0h3m77 0h1m53 0h1m57 0h1m61 0h1m-333 1h4m71 0h3m256 0h1m111 0h2m-451 1h3m72 0h3m81 0h1m54 0h1m60 0h1m63 0h1m111 0h4m-443 1h3m58 0h2m82 0h1m183 0h1m113 0h4m-451 1h4m201 0h1m62 0h1m66 0h1m115 0h3m-458 1h4m147 0h1m189 0h1m102 0h2m-449 1h3m149 0h1m59 0h1m64 0h1m68 0h1m102 0h4m-441 1h3m333 0h1m104 0h4m-449 1h4m138 0h1m60 0h1m67 0h1m70 0h1m106 0h3m-456 1h4m140 0h1m203 0h1m93 0h2m-447 1h3m207 0h1m68 0h1m167 0h4m-306 1h1m207 0h1m97 0h4m-312 1h1m65 0h1m71 0h1m73 0h1m88 0h2m9 0h3m-101 1h1m88 0h3m-435 1h2m125 0h1m66 0h1m73 0h1m76 0h1m89 0h3m-441 1h3m125 0h1m221 0h1m90 0h3m-447 1h3m197 0h1m75 0h1m78 0h1m91 0h2m-452 1h3m129 0h1m227 0h1m-363 1h2m10 0h2m118 0h1m71 0h1m77 0h1m81 0h1m-356 1h3m354 0h1m-361 1h3m121 0h1m73 0h1m79 0h1m83 0h1m69 0h2m-437 1h3m364 0h1m69 0h3m-442 1h2m10 0h2m113 0h1m74 0h1m82 0h1m85 0h1m70 0h3m-436 1h3m113 0h1m247 0h1m71 0h3m-442 1h3m192 0h1m84 0h1m88 0h1m60 0h2m10 0h2m-447 1h3m8 0h2m107 0h1m253 0h1m60 0h3m-440 1h2m9 0h2m107 0h1m79 0h1m86 0h1m90 0h1m61 0h3m-435 1h3m369 0h1m53 0h1m8 0h3m-440 1h2m110 0h1m80 0h1m88 0h1m146 0h2m9 0h2m-444 1h2m110 0h1m267 0h1m52 0h2m-437 1h2m195 0h1m90 0h1m95 0h1m52 0h3m-328 1h1m273 0h1m44 0h1m8 0h2m-332 1h1m85 0h1m92 0h1m98 0h1m43 0h2m8 0h2m-430 1h1m375 0h1m43 0h2m-424 1h2m94 0h1m86 0h1m95 0h1m100 0h1m43 0h3m-430 1h3m94 0h1m332 0h2m-434 1h2m6 0h2m178 0h1m96 0h1m148 0h2m-438 1h2m6 0h2m89 0h1m-102 1h2m6 0h2m181 0h1m99 0h1m132 0h2m-420 1h2m91 0h1m326 0h2m-424 1h2m8 0h2m81 0h1m93 0h1m101 0h1m134 0h2m-428 1h2m8 0h2m416 0h3m-424 1h3m83 0h1m94 0h1m103 0h1m127 0h2m9 0h2m-428 1h2m7 0h1m76 0h1m330 0h2m9 0h2m-432 1h2m7 0h2m173 0h1m106 0h1m129 0h2m-425 1h2m7 0h2m77 0h1m329 0h1m6 0h3m-421 1h2m77 0h1m99 0h1m107 0h1m124 0h2m7 0h2m-425 1h2m414 0h2m7 0h2m-429 1h2m79 0h1m100 0h1m110 0h1m126 0h2m-423 1h1m79 0h1m333 0h1m8 0h2m-410 1h1m167 0h1m111 0h1m119 0h2m8 0h2m-414 1h2m63 0h1m338 0h2m8 0h1m-417 1h2m63 0h1m105 0h1m114 0h1m121 0h2m-412 1h2m410 0h2m-416 1h2m8 0h1m56 0h1m106 0h1m117 0h1m123 0h2m-420 1h2m8 0h2m408 0h1m-422 1h1m8 0h2m57 0h1m108 0h1m118 0h1m109 0h1m-400 1h2m57 0h1m340 0h2m-404 1h2m6 0h2m161 0h1m121 0h1m110 0h2m-408 1h2m7 0h1m51 0h1m339 0h1m6 0h2m-411 1h1m7 0h2m50 0h1m112 0h1m123 0h1m105 0h2m6 0h2m-407 1h2m7 0h1m389 0h2m6 0h2m-410 1h1m7 0h2m43 0h1m114 0h1m125 0h1m100 0h1m6 0h2m6 0h1m-413 1h2m6 0h2m43 0h1m344 0h2m6 0h2m-409 1h1m6 0h2m161 0h1m127 0h1m102 0h1m7 0h2m-406 1h2m395 0h2m7 0h1m-409 1h2m165 0h1m129 0h1m95 0h1m7 0h2m-404 1h1m14 0h1m379 0h2m7 0h1m-392 1h2m152 0h1m132 0h1m96 0h1m7 0h2m-395 1h1m385 0h2m7 0h1m-398 1h2m154 0h1m134 0h1m98 0h2m-394 1h2m7 0h1m384 0h1m-396 1h1m7 0h2m149 0h1m136 0h1m86 0h1m12 0h2m-400 1h2m7 0h1m376 0h1m13 0h1m-402 1h1m7 0h2m5 0h1m145 0h1m138 0h1m87 0h2m-383 1h1m5 0h2m375 0h1m-385 1h1m5 0h1m148 0h1m140 0h1m80 0h1m7 0h1m-388 1h2m4 0h2m6 0h1m365 0h2m6 0h1m-390 1h1m5 0h1m6 0h2m142 0h1m142 0h1m82 0h1m6 0h2m-387 1h1m6 0h1m365 0h1m5 0h2m6 0h1m-390 1h2m6 0h1m144 0h1m145 0h1m76 0h2m5 0h2m5 0h1m-392 1h1m6 0h2m370 0h1m6 0h1m-381 1h1m147 0h1m146 0h1m72 0h1m5 0h1m6 0h2m-384 1h1m11 0h1m357 0h1m5 0h2m6 0h1m-387 1h2m11 0h1m136 0h1m149 0h1m72 0h2m5 0h1m-382 1h1m11 0h2m362 0h1m5 0h2m-373 1h1m6 0h1m132 0h1m151 0h1m73 0h1m6 0h1m-375 1h1m6 0h1m360 0h1m-370 1h1m5 0h2m133 0h1m153 0h1m62 0h1m11 0h2m-374 1h2m5 0h1m353 0h1m12 0h1m-376 1h1m6 0h1m6 0h1m128 0h1m156 0h1m62 0h2m11 0h1m-378 1h1m6 0h1m6 0h1m344 0h1m6 0h1m-362 1h2m5 0h2m130 0h1m157 0h1m57 0h1m6 0h1m-364 1h1m6 0h1m6 0h1m342 0h2m5 0h1m-366 1h1m6 0h1m6 0h1m125 0h1m160 0h1m52 0h1m5 0h1m5 0h2m-362 1h1m5 0h2m341 0h1m5 0h1m6 0h1m-365 1h2m5 0h1m128 0h1m161 0h1m53 0h1m5 0h1m6 0h1m-367 1h1m6 0h1m340 0h1m5 0h1m5 0h2m-363 1h1m6 0h1m10 0h1m118 0h1m164 0h1m47 0h1m5 0h1m6 0h1m-359 1h2m10 0h1m193 0h1m139 0h1m5 0h1m6 0h1m-361 1h1m11 0h1m119 0h1m74 0h1m140 0h1m5 0h1m-356 1h1m11 0h1m5 0h1m189 0h1m141 0h1m5 0h1m-346 1h1m5 0h1m115 0h1m75 0h1m141 0h2m4 0h1m-348 1h1m5 0h1m192 0h1m131 0h1m11 0h1m4 0h1m-350 1h1m5 0h1m4 0h1m111 0h1m76 0h1m132 0h1m11 0h1m-347 1h1m4 0h2m4 0h1m189 0h1m133 0h1m11 0h1m-349 1h1m4 0h1m5 0h1m113 0h1m76 0h1m128 0h1m5 0h1m11 0h1m-351 1h1m4 0h1m5 0h1m5 0h1m185 0h1m129 0h1m5 0h1m-336 1h1m5 0h1m5 0h1m108 0h1m78 0h1m124 0h1m4 0h1m5 0h1m-338 1h1m5 0h1m5 0h1m188 0h1m125 0h1m4 0h1m5 0h1m-340 1h1m5 0h1m5 0h1m109 0h1m79 0h1m126 0h1m4 0h1m5 0h1m-336 1h1m5 0h1m190 0h1m121 0h1m5 0h1m4 0h1m5 0h1m-338 1h1m5 0h1m10 0h1m100 0h1m202 0h1m5 0h1m4 0h1m5 0h1m-340 1h1m5 0h1m10 0h1m305 0h1m5 0h1m4 0h1m-330 1h1m10 0h1m101 0h1m205 0h1m4 0h1m5 0h1m-332 1h1m10 0h1m5 0h1m303 0h1m4 0h1m5 0h1m-334 1h1m10 0h1m5 0h1m97 0h1m197 0h1m9 0h1m4 0h1m-319 1h1m5 0h1m4 0h1m292 0h1m9 0h1m4 0h1m-320 1h1m4 0h1m4 0h1m93 0h1m200 0h1m9 0h1m4 0h1m-322 1h1m4 0h1m4 0h1m290 0h1m4 0h1m10 0h1m-319 1h1m4 0h1m5 0h1m4 0h1m88 0h1m197 0h1m4 0h1m10 0h1m-321 1h1m4 0h1m5 0h1m4 0h1m282 0h1m5 0h1m4 0h1m-312 1h1m4 0h1m5 0h1m4 0h1m90 0h1m193 0h1m4 0h1m5 0h1m-309 1h1m5 0h1m5 0h1m285 0h1m4 0h1m5 0h1m-311 1h1m5 0h1m5 0h1m90 0h1m190 0h1m4 0h1m5 0h1m4 0h1m-305 1h1m4 0h1m9 0h1m273 0h1m4 0h1m5 0h1m4 0h1m-307 1h1m4 0h1m9 0h1m82 0h1m192 0h1m4 0h1m5 0h1m4 0h1m-309 1h1m4 0h1m9 0h1m4 0h1m271 0h1m5 0h1m4 0h1m-299 1h1m9 0h1m3 0h1m78 0h1m185 0h1m8 0h1m5 0h1m4 0h1m-301 1h1m9 0h1m4 0h1m3 0h1m261 0h1m8 0h1m4 0h1m5 0h1m-303 1h1m9 0h1m4 0h1m3 0h1m74 0h1m187 0h1m9 0h1m4 0h1m-289 1h1m4 0h1m4 0h1m258 0h1m4 0h1m9 0h1m4 0h1m-291 1h1m4 0h1m4 0h1m5 0h1m254 0h1m4 0h1m8 0h1m-286 1h1m4 0h1m3 0h1m5 0h1m251 0h1m3 0h1m5 0h1m8 0h1m-288 1h1m4 0h1m4 0h1m4 0h1m253 0h1m3 0h1m4 0h1m9 0h1m-290 1h1m4 0h1m4 0h1m5 0h1m248 0h1m4 0h1m4 0h1m4 0h1m-276 1h1m4 0h1m4 0h1m8 0h1m241 0h1m4 0h1m4 0h1m4 0h1m-278 1h1m4 0h1m4 0h1m8 0h1m242 0h1m5 0h1m3 0h1m5 0h1m-275 1h1m4 0h1m9 0h1m4 0h1m238 0h1m5 0h1m3 0h1m4 0h1m-275 1h1m3 0h1m9 0h1m4 0h1m231 0h1m8 0h1m4 0h1m4 0h1m4 0h1m-277 1h1m4 0h1m8 0h1m5 0h1m3 0h1m228 0h1m7 0h1m5 0h1m3 0h1m-268 1h1m9 0h1m4 0h1m3 0h1m229 0h1m8 0h1m5 0h1m3 0h1m-270 1h1m9 0h1m4 0h1m4 0h1m3 0h1m221 0h1m4 0h1m7 0h1m5 0h1m-256 1h1m4 0h1m3 0h1m3 0h1m218 0h1m3 0h1m4 0h1m8 0h1m5 0h1m-258 1h1m4 0h1m4 0h1m3 0h1m219 0h1m3 0h1m4 0h1m8 0h1m-254 1h1m5 0h1m3 0h1m3 0h1m215 0h1m4 0h1m4 0h1m3 0h1m8 0h1m-254 1h1m4 0h1m4 0h1m3 0h1m8 0h1m207 0h1m4 0h1m3 0h1m4 0h1m8 0h1m-256 1h1m4 0h1m4 0h1m3 0h1m8 0h1m208 0h1m4 0h1m4 0h1m3 0h1m-242 1h1m4 0h1m3 0h1m8 0h1m4 0h1m204 0h1m4 0h1m3 0h1m4 0h1m-244 1h1m4 0h1m3 0h1m8 0h1m4 0h1m3 0h1m193 0h1m7 0h1m4 0h1m4 0h1m3 0h1m-239 1h1m3 0h1m8 0h1m4 0h1m3 0h1m189 0h1m3 0h1m8 0h1m4 0h1m4 0h1m3 0h1m-241 1h1m3 0h1m8 0h1m4 0h1m3 0h1m4 0h1m185 0h1m4 0h1m7 0h1m4 0h1m4 0h1m-233 1h1m8 0h1m4 0h1m3 0h1m4 0h1m181 0h1m4 0h1m3 0h1m8 0h1m4 0h1m4 0h1m-235 1h1m8 0h1m4 0h1m3 0h1m4 0h1m182 0h1m4 0h1m4 0h1m7 0h1m4 0h1m-221 1h1m4 0h1m3 0h1m4 0h1m179 0h1m3 0h1m4 0h1m3 0h1m8 0h1m4 0h1m-223 1h1m4 0h1m3 0h1m4 0h1m8 0h1m172 0h1m2 0h1m4 0h1m4 0h1m7 0h1m-218 1h1m4 0h1m3 0h1m4 0h1m7 0h1m4 0h1m159 0h1m8 0h1m3 0h1m4 0h1m3 0h1m8 0h1m-220 1h1m4 0h1m4 0h1m3 0h1m8 0h1m3 0h1m3 0h1m156 0h1m9 0h1m2 0h1m4 0h1m4 0h1m-207 1h1m3 0h1m4 0h1m7 0h1m4 0h1m3 0h1m3 0h1m149 0h1m3 0h1m8 0h1m3 0h1m3 0h1m4 0h1m-208 1h1m4 0h1m4 0h1m7 0h1m3 0h1m3 0h1m4 0h1m145 0h1m3 0h1m3 0h1m9 0h1m2 0h1m4 0h1m4 0h1m-205 1h1m4 0h1m7 0h1m4 0h1m3 0h1m3 0h1m142 0h1m3 0h1m4 0h1m3 0h1m8 0h1m3 0h1m3 0h1m4 0h1m-205 1h1m4 0h1m7 0h1m3 0h1m4 0h1m3 0h1m8 0h1m133 0h1m4 0h1m3 0h1m3 0h1m8 0h1m3 0h1m4 0h1m-197 1h1m8 0h1m3 0h1m3 0h1m4 0h1m8 0h1m2 0h1m123 0h1m7 0h1m3 0h1m3 0h1m4 0h1m8 0h1m3 0h1m3 0h1m-197 1h1m7 0h1m4 0h1m3 0h1m3 0h1m8 0h1m3 0h1m3 0h1m115 0h1m3 0h1m7 0h1m3 0h1m4 0h1m3 0h1m8 0h1m3 0h1m-185 1h1m3 0h1m4 0h1m3 0h1m8 0h1m2 0h1m4 0h1m3 0h1m107 0h1m3 0h1m3 0h1m7 0h1m4 0h1m3 0h1m3 0h1m9 0h1m-183 1h1m4 0h1m3 0h1m4 0h1m8 0h1m2 0h1m3 0h1m4 0h1m103 0h1m3 0h1m3 0h1m4 0h1m7 0h1m3 0h1m3 0h1m4 0h1m8 0h1m-183 1h1m3 0h1m4 0h1m3 0h1m8 0h1m3 0h1m3 0h1m3 0h1m8 0h1m95 0h1m3 0h1m4 0h1m3 0h1m7 0h1m3 0h1m4 0h1m3 0h1m-170 1h1m4 0h1m3 0h1m8 0h1m3 0h1m3 0h1m3 0h1m8 0h1m2 0h1m84 0h1m7 0h1m4 0h1m3 0h1m3 0h1m7 0h1m4 0h1m3 0h1m4 0h1m-167 1h1m4 0h1m8 0h1m2 0h1m4 0h1m3 0h1m7 0h1m3 0h1m3 0h1m3 0h1m73 0h1m2 0h1m8 0h1m3 0h1m3 0h1m3 0h1m8 0h1m3 0h1m3 0h1m4 0h1m-167 1h1m3 0h1m8 0h1m3 0h1m3 0h1m4 0h1m7 0h1m3 0h1m3 0h1m3 0h1m7 0h1m57 0h1m3 0h1m3 0h1m3 0h1m7 0h1m3 0h1m3 0h1m4 0h1m7 0h1m3 0h1m4 0h1m-159 1h1m8 0h1m3 0h1m3 0h1m3 0h1m8 0h1m2 0h1m4 0h1m3 0h1m7 0h1m3 0h1m3 0h1m3 0h1m29 0h1m3 0h1m3 0h1m7 0h1m3 0h1m3 0h1m3 0h1m7 0h1m3 0h1m4 0h1m3 0h1m7 0h1m4 0h1m3 0h1m-150 1h1m3 0h1m3 0h1m3 0h1m8 0h1m2 0h1m3 0h1m3 0h1m8 0h1m3 0h1m3 0h1m3 0h1m7 0h1m3 0h1m2 0h1m2 0h1m7 0h1m3 0h1m3 0h1m3 0h1m7 0h1m3 0h1m4 0h1m2 0h1m7 0h1m4 0h1m3 0h1m3 0h1m8 0h1m3 0h1m-147 1h1m3 0h1m4 0h1m3 0h1m7 0h1m3 0h1m3 0h1m3 0h1m8 0h1m3 0h1m3 0h1m3 0h1m7 0h1m3 0h1m2 0h1m2 0h1m7 0h1m3 0h1m3 0h1m3 0h1m8 0h1m3 0h1m3 0h1m2 0h1m8 0h1m3 0h1m3 0h1m3 0h1m8 0h1m-143 1h1m3 0h1m3 0h1m4 0h1m7 0h1m3 0h1m3 0h1m3 0h1m7 0h1m4 0h1m3 0h1m3 0h1m7 0h1m3 0h1m2 0h1m2 0h1m7 0h1m3 0h1m3 0h1m3 0h1m8 0h1m3 0h1m3 0h1m3 0h1m7 0h1m3 0h1m3 0h1m4 0h1m-131 1h1m3 0h1m3 0h1m8 0h1m3 0h1m3 0h1m3 0h1m7 0h1m4 0h1m3 0h1m3 0h1m7 0h1m3 0h1m2 0h1m2 0h1m7 0h1m3 0h1m3 0h1m3 0h1m8 0h1m3 0h1m3 0h1m3 0h1m7 0h1m3 0h1m4 0h1m3 0h1m-127 1h1m3 0h1m8 0h1m3 0h1m3 0h1m3 0h1m7 0h1m4 0h1m3 0h1m3 0h1m7 0h1m3 0h1m2 0h1m2 0h1m7 0h1m3 0h1m3 0h1m3 0h1m8 0h1m3 0h1m3 0h1m3 0h1m7 0h1m4 0h1m3 0h1m3 0h1m-123 1h1m7 0h1m3 0h1m4 0h1m3 0h1m7 0h1m3 0h1m4 0h1m3 0h1m7 0h1m3 0h1m2 0h1m2 0h1m7 0h1m3 0h1m3 0h1m4 0h1m7 0h1m3 0h1m3 0h1m3 0h1m8 0h1m3 0h1m3 0h1m-111 1h1m3 0h1m3 0h1m3 0h1m8 0h1m3 0h1m3 0h1m3 0h1m7 0h1m4 0h1m2 0h1m2 0h1m8 0h1m3 0h1m3 0h1m3 0h1m7 0h1m3 0h1m4 0h1m3 0h1m7 0h1m3 0h1m-107 1h1m3 0h1m3 0h1m3 0h1m8 0h1m3 0h1m3 0h1m3 0h1m7 0h1m3 0h1m3 0h1m3 0h1m7 0h1m3 0h1m3 0h1m3 0h1m8 0h1m3 0h1m3 0h1m3 0h1m7 0h1m-99 1h1m3 0h1m3 0h1m7 0h1m4 0h1m3 0h1m3 0h1m7 0h1m3 0h1m3 0h1m3 0h1m7 0h1m3 0h1m3 0h1m3 0h1m8 0h1m3 0h1m3 0h1m3 0h1m-87 1h1m3 0h1m7 0h1m4 0h1m3 0h1m3 0h1m7 0h1m3 0h1m3 0h1m3 0h1m7 0h1m3 0h1m3 0h1m3 0h1m8 0h1m3 0h1m3 0h1m-71 1h1m4 0h1m3 0h1m3 0h1m7 0h1m3 0h1m3 0h1m3 0h1m7 0h1m3 0h1m3 0h1m3 0h1m8 0h1m3 0h1m-67 1h1m4 0h1m3 0h1m3 0h1m7 0h1m3 0h1m3 0h1m3 0h1m7 0h1m3 0h1m3 0h1m3 0h1m-45 1h1m3 0h1m7 0h1m3 0h1m3 0h1m3 0h1m7 0h1m3 0h1m3 0h1m-25 1h1m3 0h1m3 0h1"/>
<path stroke="#ff0000" d="M146 81.5h5m-2 1h2m-3 1h1m1 0h1m-4 1h1m2 0h1m-5 1h1m3 0h1m-6 1h1m-10 1h1m7 0h1m-8 1h1m5 0h1m-6 1h1m3 0h1m-4 1h1m1 0h1m-2 1h1m-2 1h1m1 0h1m-4 1h1m3 0h1m-6 1h1m5 0h1m-8 1h1m7 0h1m-10 1h1m-2 1h1m611 9h1m2 0h1m2 0h1m-8 1h2m1 0h2m1 0h1m-7 1h1m1 0h2m1 0h2m-8 1h1m2 0h1m2 0h1m-5 2h1m2 0h1m2 0h1m-468 1h1m459 0h2m1 0h2m1 0h1m-468 1h1m460 0h1m1 0h2m1 0h2m-478 1h2m7 0h1m460 0h1m2 0h1m2 0h1m-475 1h1m6 0h1m-7 1h1m5 0h1m-7 1h1m5 0h1m-7 1h1m5 0h1m-8 1h1m6 0h1m-8 1h1m6 0h1m-44 1h5m30 0h1m7 0h1m-46 1h2m5 0h2m28 0h1m7 0h1m-47 1h1m9 0h1m26 0h1m8 0h1m80 0h6m-134 1h1m11 0h1m25 0h1m8 0h1m84 0h2m-135 1h1m13 0h1m23 0h1m9 0h1m83 0h1m1 0h1m-135 1h1m13 0h1m23 0h15m78 0h1m2 0h1m-136 1h1m15 0h1m32 0h1m81 0h1m3 0h1m-136 1h1m15 0h1m32 0h1m80 0h1m4 0h1m-136 1h1m7 0h1m7 0h1m105 0h5m2 0h1m-130 1h1m15 0h1m104 0h1m5 0h2m-129 1h1m15 0h1m103 0h1m7 0h1m-128 1h1m13 0h1m103 0h1m9 0h1m-129 1h1m13 0h1m103 0h1m9 0h1m-128 1h1m11 0h1m104 0h1m9 0h1m-127 1h1m9 0h1m105 0h1m9 0h1m-126 1h2m5 0h2m106 0h1m9 0h1m-124 1h5m109 0h1m7 0h1m-8 1h1m5 0h1m-6 1h5m384 7h1m6 0h1m-7 1h6m-5 1h1m2 0h1m-4 1h1m2 0h1m-4 1h1m2 0h1m-4 1h1m2 0h1m-477 1h1m472 0h1m2 0h1m-5 1h6m-7 1h1m6 0h1m-495 1h1m24 4h1m68 0h1m-72 3h1m67 3h1m-75 3h1m74 0h1m12 2h1m-92 1h1m78 0h1m11 0h1m0 1h1m-1 1h1m-95 1h1m82 0h1m10 0h1m0 1h1m-1 1h1m-99 1h1m86 0h1m10 0h1m0 1h1m-1 1h1m-103 1h1m90 0h1m10 0h1m0 1h1m-1 1h1m-107 1h1m94 0h1m10 0h1m0 1h1m-1 1h1m-110 1h1m97 0h1m10 0h1m0 1h1m377 0h3m-381 1h1m376 0h1m3 0h1m-495 1h1m102 0h1m9 0h1m376 0h1m3 0h1m-381 1h1m375 0h1m3 0h1m-381 1h1m373 0h3m3 0h3m-500 1h1m106 0h1m9 0h1m0 1h1m372 0h9m-382 1h1m-122 1h1m110 0h1m9 0h1m0 1h1m-1 1h1m-125 1h1m113 0h1m9 0h1m0 1h1m-1 1h1m-129 1h1m117 0h1m9 0h1m0 1h1m-1 1h1m-133 1h1m122 0h1m8 0h1m0 1h1m-1 1h1m-137 1h1m126 0h1m8 0h1m0 1h1m-1 1h1m-140 1h1m129 0h1m8 0h1m0 1h1m-1 1h1m-144 1h1m133 0h1m8 0h1m0 1h1m-1 1h1m-148 1h1m137 0h1m8 0h1m0 1h1m-1 1h1m-152 1h1m142 0h1m8 0h1m-1 1h1m-1 1h1m-155 1h1m145 0h1m8 0h1m-1 1h1m-1 1h1m-159 1h1m149 0h1m8 0h1m-1 1h1m-1 1h1m-163 1h1m153 0h1m8 0h1m-1 1h1m-1 1h1m-167 1h1m157 0h1m8 0h1m-1 1h1m-1 1h1m-170 1h1m161 0h1m7 0h1m-1 1h1m-1 1h1m361 0h3m-538 1h1m165 0h1m7 0h1m358 0h2m3 0h2m-366 1h1m358 0h1m5 0h1m-366 1h1m357 0h1m7 0h1m-544 1h1m169 0h1m7 0h1m356 0h1m3 0h1m3 0h1m-366 1h1m356 0h1m7 0h1m-366 1h1m357 0h1m5 0h1m-546 1h1m173 0h1m7 0h1m356 0h2m3 0h2m-364 1h1m358 0h3m-362 1h1m-185 1h1m176 0h1m7 0h1m-1 1h1m-1 1h1m-189 1h1m181 0h1m6 0h1m-1 1h1m-1 1h1m-193 1h1m185 0h1m6 0h1m-1 1h1m-1 1h1m-197 1h1m189 0h1m6 0h1m-1 1h1m-1 1h1m-200 1h1m192 0h1m6 0h1m-1 1h1m-1 1h1m-204 1h1m196 0h1m6 0h1m163 0h5m-169 1h1m162 0h1m5 0h1m-170 1h1m161 0h1m7 0h1m-378 1h1m201 0h1m5 0h1m159 0h1m9 0h1m-171 1h1m158 0h1m11 0h1m-172 1h1m158 0h1m11 0h1m-383 1h1m205 0h1m5 0h1m157 0h1m11 0h1m-171 1h1m157 0h1m11 0h1m-171 1h1m157 0h1m11 0h1m-385 1h1m208 0h1m5 0h1m157 0h1m9 0h1m-169 1h1m158 0h1m7 0h1m-168 1h1m158 0h1m7 0h1m-386 1h1m212 0h1m5 0h1m153 0h1m3 0h1m7 0h1m-167 1h1m154 0h1m1 0h1m9 0h1m-168 1h1m155 0h1m11 0h1m-391 1h1m216 0h1m5 0h1m167 0h1m182 0h3m-354 1h1m168 0h1m182 0h2m-354 1h1m350 0h1m1 0h1m-580 1h1m220 0h1m5 0h1m345 0h2m1 0h1m-350 1h1m344 0h1m2 0h1m-349 1h1m343 0h1m4 0h1m-579 1h1m224 0h1m4 0h1m342 0h1m4 0h1m-349 1h1m343 0h1m2 0h1m-348 1h1m344 0h2m-580 1h1m228 0h1m4 0h1m-1 1h1m348 0h1m-350 1h1m342 0h2m3 0h1m-586 1h1m232 0h1m4 0h1m343 0h1m2 0h1m-348 1h1m343 0h1m2 0h1m-348 1h1m342 0h1m3 0h1m-589 1h1m236 0h1m4 0h1m341 0h1m3 0h1m-347 1h1m340 0h1m4 0h1m-347 1h1m340 0h8m-593 1h1m239 0h1m4 0h1m344 0h1m-346 1h1m-1 1h1m-249 1h1m244 0h1m3 0h1m-1 1h1m-258 1h1m256 0h1m-4 1h1m3 0h1m-1 1h1m-1 1h1m-4 1h1m3 0h1m-1 1h1m-1 1h1m-4 1h1m3 0h1m-1 1h1m-1 1h1m-4 1h1m3 0h1m-1 1h1m-1 1h1m-3 1h1m2 0h1m-1 1h1m-1 1h1m-3 1h1m2 0h1m-1 1h1m0 1h1m-4 1h1m2 0h1m-1 1h1m0 1h1m-4 1h1m2 0h1m-1 1h1m0 1h1m-4 1h1m2 0h1m-1 1h1m0 1h1m-3 1h1m1 0h1m-1 1h1m0 1h1m-3 1h1m1 0h1m-1 1h1m0 1h1m-3 1h1m1 0h1m-1 1h1m0 1h1m-3 1h1m1 0h1m-1 1h1m0 1h1m-3 1h1m1 0h1m-1 1h1m0 1h1m-2 1h2m-1 1h1m0 1h1m-2 1h2m-1 1h1m0 1h1m-2 1h2m-1 1h1m0 1h1m-2 1h2m-1 1h1m0 1h1m-2 1h2m-1 1h1m0 1h1m-1 1h1m-1 1h1m0 1h1m-1 1h1m0 2h1m-239 170h3m7 0h3m-14 1h1m3 0h1m5 0h1m3 0h1m-16 1h1m5 0h1m3 0h1m5 0h1m-17 1h1m5 0h1m3 0h1m5 0h1m-17 1h1m5 0h1m3 0h1m5 0h1m-16 1h1m5 0h1m1 0h1m5 0h1m-14 1h1m4 0h1m1 0h1m4 0h1m-8 1h1m1 0h1m-3 1h1m1 0h1m-2 1h1m-1 1h1m-1 1h1m-1 1h1m-1 1h1m-1 1h1m-1 1h1m-1 1h1"/>
<path stroke="#ffff00" d="M744 116.5h1m7 0h1m-8 1h1m5 0h1m-6 1h1m3 0h1m-5 1h1m3 0h1m-7 1h9m-7 1h1m3 0h1m-5 1h1m3 0h1m-6 1h1m5 0h1m-8 1h1m7 0h1m-252 10h1m3 0h1m3 0h1m-8 1h1m1 0h1m1 0h1m1 0h1m1 0h1m-8 1h1m3 0h1m3 0h1m3 0h1m-13 1h1m3 0h1m3 0h1m2 0h2m-13 1h1m3 0h1m3 0h1m1 0h1m1 0h1m-13 1h1m3 0h1m3 0h2m2 0h1m-13 1h1m3 0h1m3 0h1m3 0h1m-13 1h1m3 0h1m3 0h1m3 0h1m-13 1h1m3 0h1m3 0h1m3 0h1m-13 1h1m3 0h1m3 0h1m3 0h1m-13 1h1m3 0h1m3 0h1m3 0h1m-13 1h1m3 0h1m3 0h1m3 0h1m-13 1h1m3 0h1m3 0h1m3 0h1m-13 1h1m3 0h1m4 0h1m1 0h1m-12 1h1m3 0h1m5 0h1m-2 1h1m1 0h1m-4 1h1m3 0h1m-250 3h1m16 3h1m-7 1h1m2 0h1m466 0h3m-479 1h3m471 0h2m3 0h2m-486 1h1m1 0h2m474 0h1m4 0h1m2 0h1m-491 1h1m1 0h1m480 0h2m2 0h1m2 0h1m-493 1h1m483 0h1m2 0h1m2 0h2m-496 1h1m487 0h1m2 0h1m4 0h1m-8 1h2m3 0h2m-500 1h1m494 0h3m-502 1h1m-5 1h1m107 0h1m2 1h1m-115 1h1m116 0h1m-121 1h1m122 0h1m-127 2h1m-184 17h1m5 0h1m3 0h3m-14 1h2m5 0h2m1 0h1m3 0h1m-16 1h1m1 0h1m5 0h3m5 0h1m-15 1h1m4 0h1m3 0h1m4 0h1m-15 1h1m3 0h1m5 0h1m3 0h1m-15 1h1m3 0h1m6 0h1m1 0h1m-14 1h1m3 0h1m6 0h2m-13 1h1m3 0h1m8 0h1m-14 1h1m3 0h1m9 0h1m677 0h1m1 0h1m1 0h1m-696 1h1m1 0h1m10 0h1m678 0h1m1 0h1m1 0h1m-696 1h1m11 0h1m678 0h1m1 0h1m1 0h1m-696 1h1m11 0h1m678 0h1m1 0h1m1 0h1m-696 1h1m11 0h1m678 0h1m1 0h1m1 0h1m-696 1h1m11 0h1m678 0h1m1 0h1m1 0h1m-696 1h1m11 0h1m678 0h1m1 0h1m1 0h1m2 0h1m-688 1h1m679 0h1m1 0h1m1 0h1m2 0h1m-689 1h1m685 0h2m-5 92h1m-3 1h5m-3 1h1m-1 1h1m1 0h2m-4 1h2m2 0h1m-5 1h1m3 0h1m-5 1h1m2 0h1m-4 1h1m2 0h1m0 1h1m-426 142h1m2 22h1m-1 1h1m-5 1h9m-5 1h1m-1 1h1m-1 1h1m-1 1h1m3 0h3m-7 1h1m2 0h1m3 0h1m-8 1h3m5 0h1m-9 1h1m7 0h1m-9 1h1m7 0h1m-9 1h1m6 0h1m-8 1h1m5 0h1m-7 1h1m5 0h1m-7 1h1m5 0h1m0 1h1m0 1h1m-15 68h1m11 0h1m-12 1h1m9 0h1m-11 1h1m9 0h1m-10 1h2m5 0h2m-7 1h5m-7 1h2m5 0h2m-10 1h1m9 0h1m-11 1h1m9 0h1m-12 1h1m11 0h1m-13 1h1m11 0h1m-13 1h1m11 0h1m-13 1h1m11 0h1m-13 1h1m11 0h1m-12 1h1m9 0h1m-11 1h1m9 0h1m-10 1h2m5 0h2m-7 1h5"/>
<path stroke="#00ffff" d="M263 162.5h1m2 0h1m2 1h1m2 0h1m2 1h1m2 1h1m2 0h1m-37 1h4m35 0h1m-36 1h6m32 0h1m2 0h1m-36 1h7m31 0h1m2 0h1m-35 1h7m30 0h1m-31 1h6m27 0h1m2 0h1m25 0h1m2 0h1m2 0h1m2 0h1m2 0h1m2 0h1m2 0h1m2 0h1m2 0h1m2 0h1m2 0h1m-97 1h1m2 0h1m2 0h1m2 0h3m1 0h4m1 0h1m2 0h1m2 0h1m2 0h1m2 0h1m2 0h1m2 0h1m2 0h1m2 0h2m1 0h1m2 0h1m2 0h1m2 0h1m2 0h1m2 0h1m2 0h1m-97 1h1m2 0h1m2 0h1m2 0h1m2 0h1m2 0h1m2 0h1m2 0h1m2 0h1m2 0h1m2 0h1m19 0h6m23 0h1m2 0h1m-27 1h7m22 0h1m2 0h1m-26 1h3m1 0h3m21 0h1m-22 1h6m18 0h1m2 0h1m-22 1h7m17 0h1m-18 1h6m14 0h1m2 0h1m-18 1h7m13 0h1m2 0h1m-17 1h6m13 0h1m-14 1h7m9 0h1m2 0h1m-13 1h7m8 0h1m-9 1h6m5 0h1m2 0h1m-9 1h2m1 0h4m4 0h1m2 0h1m-8 1h6m4 0h1m-5 1h1m1 0h6m2 0h1m-4 1h7m0 1h6m0 1h4m33 178h1m-5 3h1m-5 3h1m-5 3h1m-5 3h1m-5 3h1m-5 3h1m-5 3h1m-5 3h1m-5 3h1m-5 3h1m-5 3h1m-5 3h1m-5 3h1m-5 3h1m-5 3h1m-5 3h1m-5 3h1m-5 3h1m-5 3h1m-5 3h1m-5 3h1m-5 3h1m-5 3h1m-5 3h1"/>
<path stroke="#008080" d="M747 336.5h3m-4 1h1m3 0h1m-6 1h1m5 0h1m-7 1h1m5 0h1m-7 1h1m5 0h1m-6 1h1m3 0h1m-6 1h2m3 0h2m-8 1h1m1 0h1m3 0h1m1 0h1m-8 1h1m5 0h1m-594 6h1m-31 2h5m-6 1h1m5 0h1m-8 1h1m7 0h1m-10 1h1m9 0h1m-12 1h1m11 0h1m-13 1h1m11 0h1m-13 1h1m11 0h1m-13 1h1m11 0h1m-13 1h1m11 0h1m-12 1h1m9 0h1m-10 1h1m7 0h1m-9 1h1m7 0h1m-11 1h3m7 0h3m-14 1h1m2 0h1m7 0h1m2 0h1m-16 1h1m3 0h1m7 0h1m3 0h1m-16 1h1m1 0h1m9 0h1m1 0h1m-14 1h1m11 0h1"/>
<g style="opacity:0.999"><text transform="translate(0,371) scale(0.8,1)" text-anchor="middle" fill="#ff0000"><tspan x="125.62" font-size="13">1</tspan></text>
<text transform="translate(0,476) scale(0.8,1)" text-anchor="middle" fill="#ffff00"><tspan x="225.62" font-size="12.6" style="font-family:'Liberation Sans',sans-serif">2</tspan></text>
<text transform="translate(0,514) scale(0.8,1)" text-anchor="middle" fill="#00ff00"><tspan x="365.62" font-size="12.6" style="font-family:'Liberation Sans',sans-serif">3</tspan></text>
<text transform="translate(0,493) scale(0.8,1)" text-anchor="middle" fill="#0000ff"><tspan x="486.88" font-size="12.6" style="font-family:'Liberation Sans',sans-serif">4</tspan></text>
<text transform="translate(0,438) scale(0.8,1)" text-anchor="middle" fill="#ff0000"><tspan x="575.62" font-size="12.6" style="font-family:'Liberation Sans',sans-serif">5</tspan></text>
<text transform="translate(0,353) scale(0.8,1)" text-anchor="middle" fill="#ffff00"><tspan x="629.38" font-size="12.6" style="font-family:'Liberation Sans',sans-serif">6</tspan></text>
<text transform="translate(0,237) scale(0.8,1)" text-anchor="middle" fill="#00ff00"><tspan x="623.12" font-size="12.6" style="font-family:'Liberation Sans',sans-serif">7</tspan></text>
<text transform="translate(0,132) scale(0.8,1)" text-anchor="middle" fill="#0000ff"><tspan x="523.12" font-size="12.6" style="font-family:'Liberation Sans',sans-serif">8</tspan></text>
<text transform="translate(0,94) scale(0.8,1)" text-anchor="middle" fill="#ff0000"><tspan x="383.12" font-size="12.6" style="font-family:'Liberation Sans',sans-serif">9</tspan></text>
<text transform="translate(0,115) scale(0.8,1)" text-anchor="middle" fill="#ffff00"><tspan x="256.88" font-size="13">1</tspan><tspan x="266.88" font-size="12.6" style="font-family:'Liberation Sans',sans-serif">0</tspan></text>
<text transform="translate(0,170) scale(0.8,1)" text-anchor="middle" fill="#00ff00"><tspan x="168.12" font-size="13">1</tspan><tspan x="178.12" font-size="13">1</tspan></text>
<text transform="translate(0,255) scale(0.8,1)" text-anchor="middle" fill="#0000ff"><tspan x="114.38" font-size="13">1</tspan><tspan x="124.38" font-size="12.6" style="font-family:'Liberation Sans',sans-serif">2</tspan></text>
<text transform="translate(110.3,308) scale(0.34,1)" font-size="23.7" letter-spacing="6.5" fill="#ff0000" vector-effect="non-scaling-stroke" style="stroke:#ff0000;stroke-width:0.35;font-family:'Liberation Sans',sans-serif">A<tspan font-size="21.3" letter-spacing="8.5">sc</tspan></text>
<text transform="translate(251.4,133) scale(0.45,1)" font-size="23.7" letter-spacing="5" fill="#ffff00" style="font-family:'Liberation Sans',sans-serif">MC</text></g>
</svg>
<div class="sb">
<div style="top:5.6px"><span class="w">Astrolog 5.40</span></div>
<div style="top:15.6px"><span class="l">"Anonymous"</span></div>
<div style="top:25.6px"><span class="l">Tue November 17, 1970</span></div>
<div style="top:35.6px"><span class="l">11:30am (ST +8:00 GMT)</span></div>
<div style="top:45.6px"><span class="l">"ks"</span></div>
<div style="top:55.6px"><span class="l">120°17E 22°37N</span></div>
<div style="top:65.6px"><span class="l">Placidus houses.</span></div>
<div style="top:75.6px"><span class="l">Tropical, Geocentric.</span></div>
<div style="top:85.6px"><span class="l">Julian Day = 2440907.6458</span></div>
<div style="top:105.6px"><span class="r"> 1st house: </span><span class="g"> 8Aqu16</span></div>
<div style="top:115.6px"><span class="y"> 2nd house: </span><span class="b">15Pis53</span></div>
<div style="top:125.6px"><span class="g"> 3rd house: </span><span class="r">21Ari21</span></div>
<div style="top:135.6px"><span class="b"> 4th house: </span><span class="y">21Tau00</span></div>
<div style="top:145.6px"><span class="r"> 5th house: </span><span class="g">16Gem23</span></div>
<div style="top:155.6px"><span class="y"> 6th house: </span><span class="b">10Can50</span></div>
<div style="top:165.6px"><span class="g"> 7th house: </span><span class="r"> 8Leo16</span></div>
<div style="top:175.6px"><span class="b"> 8th house: </span><span class="y">15Vir53</span></div>
<div style="top:185.6px"><span class="r"> 9th house: </span><span class="g">21Lib21</span></div>
<div style="top:195.6px"><span class="y">10th house: </span><span class="b">21Sco00</span></div>
<div style="top:205.6px"><span class="g">11th house: </span><span class="r">16Sag23</span></div>
<div style="top:215.6px"><span class="b">12th house: </span><span class="y">10Cap50</span></div>
<div style="top:235.6px"><span class="r"> Sun: </span><span class="b">24Sco22</span><span class="w"> </span><span class="l"> - 0°00'</span></div>
<div style="top:245.6px"><span class="b">Moon: </span><span class="b">11Can49</span><span class="w"> </span><span class="l"> + 3°39'</span></div>
<div style="top:255.6px"><span class="g">Merc: </span><span class="r"> 6Sag15</span><span class="w"> </span><span class="l"> - 1°39'</span></div>
<div style="top:265.6px"><span class="g">Venu: </span><span class="b">13Sco37</span><span class="w">R</span><span class="l"> - 2°46'</span></div>
<div style="top:275.6px"><span class="r">Mars: </span><span class="g">17Lib35</span><span class="w"> </span><span class="l"> + 1°03'</span></div>
<div style="top:285.6px"><span class="r">Jupi: </span><span class="b">18Sco12</span><span class="w"> </span><span class="l"> + 0°53'</span></div>
<div style="top:295.6px"><span class="y">Satu: </span><span class="y">18Tau42</span><span class="w">R</span><span class="l"> - 2°30'</span></div>
<div style="top:305.6px"><span class="g">Uran: </span><span class="g">11Lib52</span><span class="w"> </span><span class="l"> + 0°40'</span></div>
<div style="top:315.6px"><span class="b">Nept: </span><span class="r"> 0Sag23</span><span class="w"> </span><span class="l"> + 1°37'</span></div>
<div style="top:325.6px"><span class="b">Plut: </span><span class="y">29Vir08</span><span class="w"> </span><span class="l"> +15°39'</span></div>
<div style="top:335.6px"><span class="d">Node: </span><span class="g">28Aqu20</span><span class="w">R</span><span class="l"> + 0°00'</span></div>
<div style="top:355.6px"><span class="l">Fire: 2, Earth: 2,</span></div>
<div style="top:365.6px"><span class="l">Air : 4, Water: 5</span></div>
<div style="top:375.6px"><span class="l">Car: 3, Fix: 7, Mut: 3</span></div>
<div style="top:385.6px"><span class="l">Yang: 6, Yin: 7</span></div>
<div style="top:395.6px"><span class="l">M: 8, N: 3, A: 5, D: 6</span></div>
<div style="top:405.6px"><span class="l">Ang: 4, Suc: 3, Cad: 4</span></div>
<div style="top:415.6px"><span class="l">Learn: 3, Share: 10</span></div>
</div>
</body></html>
